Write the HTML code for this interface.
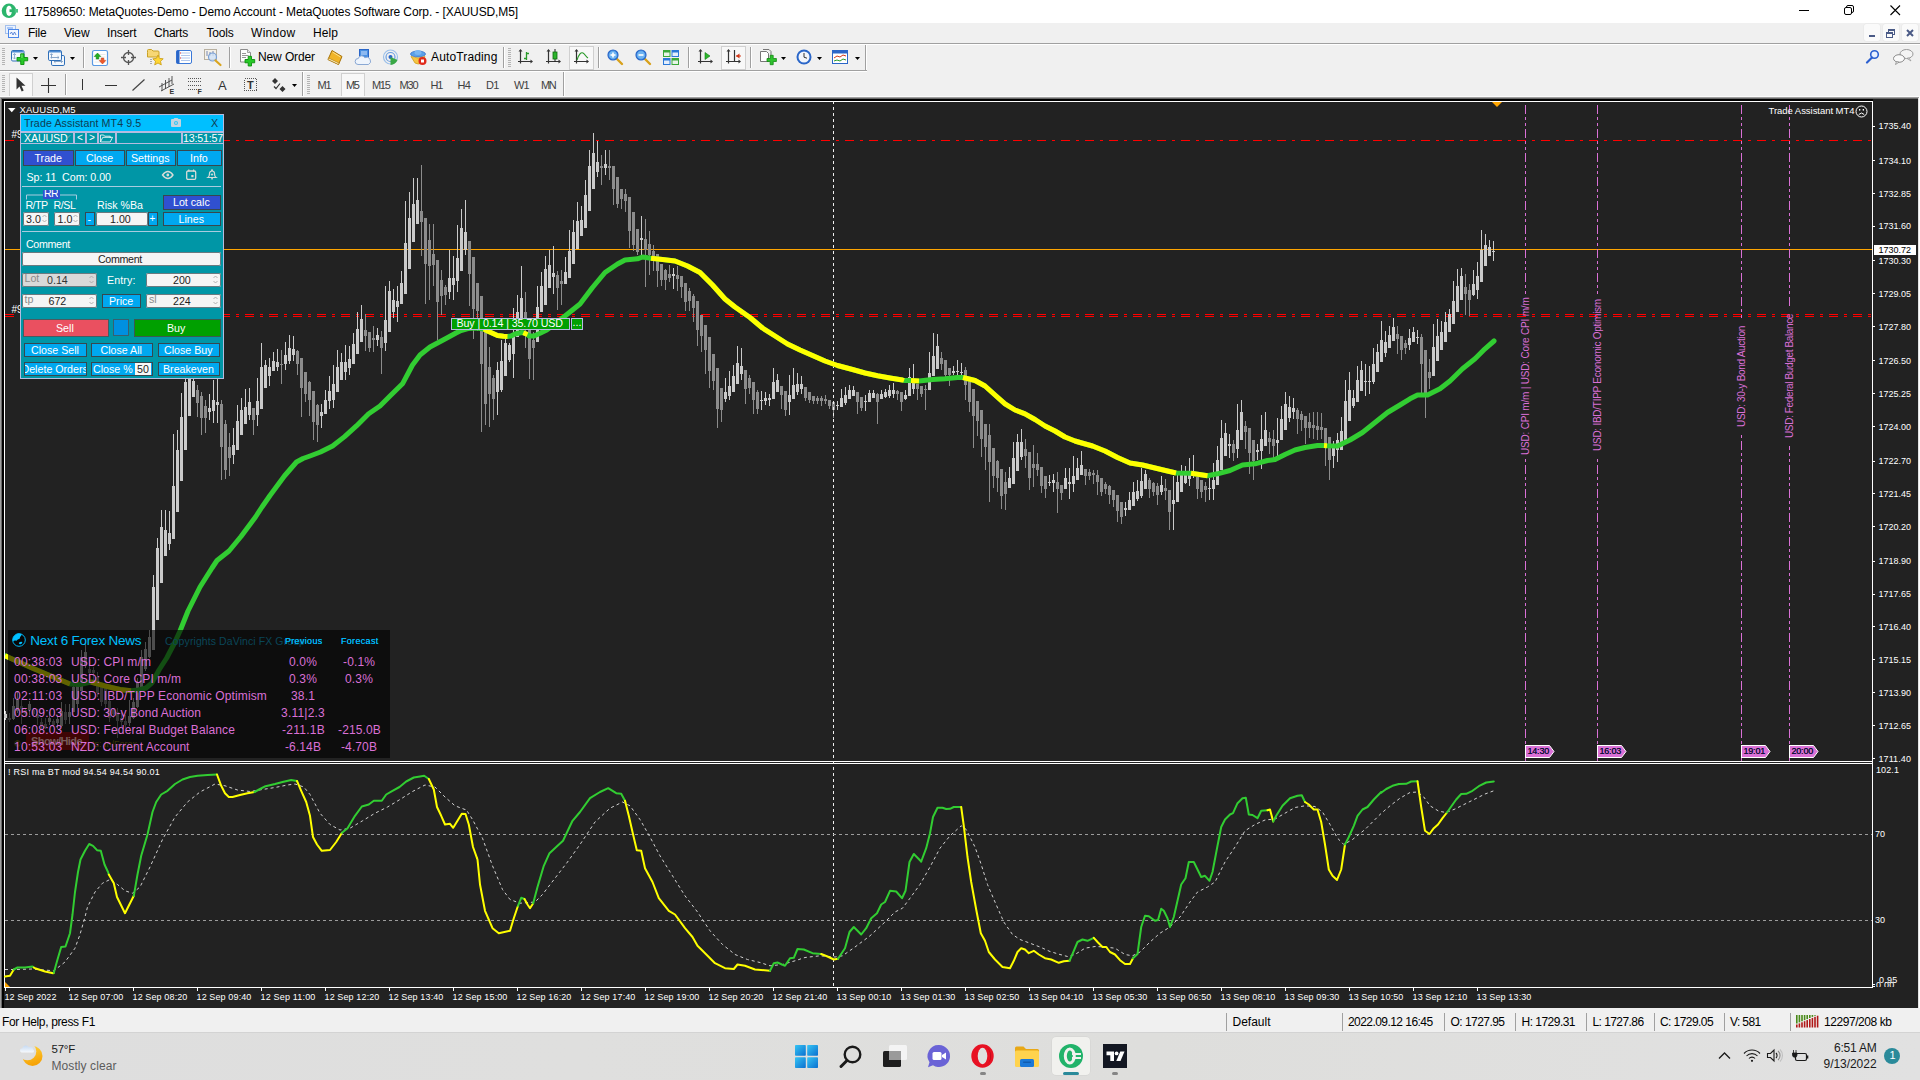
<!DOCTYPE html><html><head><meta charset="utf-8"><title>MT4</title><style>
html,body{margin:0;padding:0;background:#f0f0f0;}
body{width:1920px;height:1080px;overflow:hidden;position:relative;font-family:"Liberation Sans",sans-serif;}
#root{position:absolute;left:0;top:0;width:1920px;height:1080px;overflow:hidden;}
svg{position:absolute;overflow:visible}
.ab{position:absolute}
</style></head><body><div id="root">
<div style="position:absolute;left:0px;top:0px;width:1920px;height:23px;background:#ffffff;"></div>
<svg style="left:1px;top:3px" width="18" height="16" viewBox="0 0 18 16"><circle cx="8" cy="7.800" r="7.300" fill="#2cb56c"/><rect x="13.500" y="6" width="3.500" height="3.600" fill="#4cc486"/><ellipse cx="8" cy="7.800" rx="2.900" ry="5.100" fill="#fff"/><rect x="8.500" y="6.300" width="5" height="2.800" fill="#2cb56c"/></svg>
<span style="position:absolute;left:24px;top:6px;font-size:12px;line-height:12px;color:#000;white-space:pre;letter-spacing:-0.104px;">117589650: MetaQuotes-Demo - Demo Account - MetaQuotes Software Corp. - [XAUUSD,M5]</span>
<div style="position:absolute;left:1799px;top:10px;width:10px;height:1px;background:#000;"></div>
<svg style="left:1844px;top:5px" width="10" height="10" viewBox="0 0 10 10"><rect x="0.5" y="2.5" width="7" height="7" rx="1.5" fill="none" stroke="#000"/><path d="M2.5 2.5v-0.5a1.5 1.5 0 0 1 1.5-1.5h4a1.5 1.5 0 0 1 1.5 1.5v4a1.5 1.5 0 0 1-1.5 1.5h-0.5" fill="none" stroke="#000"/></svg>
<svg style="left:1890px;top:5px" width="11" height="11" viewBox="0 0 11 11"><path d="M0.5 0.5l9.5 9.5M10 0.5l-9.5 9.5" stroke="#000" stroke-width="1.1" fill="none"/></svg>
<div style="position:absolute;left:0px;top:23px;width:1920px;height:20px;background:#f0f0f0;"></div>
<svg style="left:5px;top:25px" width="15" height="14" viewBox="0 0 15 14"><rect x="0.5" y="0.5" width="10" height="8" fill="#eaf2ff" stroke="#5a8ee0" stroke-dasharray="1 1"/><rect x="3.5" y="4.5" width="10" height="8" fill="#f4f8ff" stroke="#4a86e8"/><path d="M5 9l1.5-2 1.5 3 1.5-3 1.5 3" stroke="#3b6fd0" fill="none" stroke-width="0.8"/><path d="M2 3h6" stroke="#4a86e8" stroke-width="0.8"/></svg>
<span style="position:absolute;left:28px;top:27px;font-size:12px;line-height:12px;color:#000;white-space:pre;letter-spacing:-0.209px;">File</span>
<span style="position:absolute;left:64px;top:27px;font-size:12px;line-height:12px;color:#000;white-space:pre;letter-spacing:-0.073px;">View</span>
<span style="position:absolute;left:107px;top:27px;font-size:12px;line-height:12px;color:#000;white-space:pre;letter-spacing:-0.085px;">Insert</span>
<span style="position:absolute;left:154px;top:27px;font-size:12px;line-height:12px;color:#000;white-space:pre;letter-spacing:-0.224px;">Charts</span>
<span style="position:absolute;left:206.5px;top:27px;font-size:12px;line-height:12px;color:#000;white-space:pre;letter-spacing:-0.202px;">Tools</span>
<span style="position:absolute;left:251px;top:27px;font-size:12px;line-height:12px;color:#000;white-space:pre;letter-spacing:0.304px;">Window</span>
<span style="position:absolute;left:313px;top:27px;font-size:12px;line-height:12px;color:#000;white-space:pre;letter-spacing:0.080px;">Help</span>
<div style="position:absolute;left:1864px;top:24px;width:16px;height:17px;background:#fafafa;border-radius:2px;box-shadow:0 0 0 0.5px #e6e6e6;"></div>
<div style="position:absolute;left:1883px;top:24px;width:16px;height:17px;background:#fafafa;border-radius:2px;box-shadow:0 0 0 0.5px #e6e6e6;"></div>
<div style="position:absolute;left:1902px;top:24px;width:16px;height:17px;background:#fafafa;border-radius:2px;box-shadow:0 0 0 0.5px #e6e6e6;"></div>
<div style="position:absolute;left:1869px;top:35px;width:6px;height:2px;background:#4a5a86;"></div>
<svg style="left:1886px;top:29px" width="10" height="10" viewBox="0 0 10 10"><rect x="2.5" y="0.5" width="6" height="5" fill="none" stroke="#4a5a86"/><rect x="2" y="0" width="7" height="2" fill="#4a5a86"/><rect x="0.5" y="3.5" width="6" height="5" fill="#fafafa" stroke="#4a5a86"/><rect x="0" y="3" width="7" height="2" fill="#4a5a86"/></svg>
<svg style="left:1906px;top:29px" width="8" height="8" viewBox="0 0 8 8"><path d="M1 1l6 6M7 1l-6 6" stroke="#4a5a86" stroke-width="2" fill="none"/></svg>
<div style="position:absolute;left:0px;top:43px;width:1920px;height:1px;background:#a0a0a0;"></div>
<div style="position:absolute;left:0px;top:44px;width:1920px;height:1px;background:#ffffff;"></div>
<div style="position:absolute;left:2px;top:48px;width:3px;height:1px;background:#b4b4b4;"></div><div style="position:absolute;left:2px;top:50px;width:3px;height:1px;background:#b4b4b4;"></div><div style="position:absolute;left:2px;top:52px;width:3px;height:1px;background:#b4b4b4;"></div><div style="position:absolute;left:2px;top:54px;width:3px;height:1px;background:#b4b4b4;"></div><div style="position:absolute;left:2px;top:56px;width:3px;height:1px;background:#b4b4b4;"></div><div style="position:absolute;left:2px;top:58px;width:3px;height:1px;background:#b4b4b4;"></div><div style="position:absolute;left:2px;top:60px;width:3px;height:1px;background:#b4b4b4;"></div><div style="position:absolute;left:2px;top:62px;width:3px;height:1px;background:#b4b4b4;"></div><div style="position:absolute;left:2px;top:64px;width:3px;height:1px;background:#b4b4b4;"></div>
<div style="position:absolute;left:865px;top:45px;width:1px;height:26px;background:#a0a0a0;"></div>
<div style="position:absolute;left:866px;top:45px;width:1px;height:26px;background:#fff;"></div>
<div style="position:absolute;left:0px;top:70px;width:867px;height:1px;background:#a0a0a0;"></div>
<div style="position:absolute;left:0px;top:71px;width:867px;height:1px;background:#ffffff;"></div>
<svg style="left:11px;top:50px" width="18" height="16" viewBox="0 0 18 16"><rect x="0.5" y="0.5" width="12.500" height="10.500" rx="1.300" fill="#f4f8fd" stroke="#2f6fb8"/><path d="M1 2.500v-0.700a0.800 0.800 0 0 1 0.800-0.800h9.900a0.800 0.800 0 0 1 0.800 0.800v0.700z" fill="#4a8ad4"/><path d="M3.500 3.500v5.500M2 5l1.500-1.500 1.500 1.500M2 7.500l1.500 1.500 1.500-1.500" stroke="#8aa8cc" stroke-width="0.900" fill="none"/><path d="M9.700 3.800h3.300v3.700h3.700v3.300h-3.700v3.700h-3.300v-3.700h-3.700v-3.300h3.700z" fill="#27c927" stroke="#0b8f0b" stroke-width="0.900"/><path d="M10.300 4.500h1.200v3.600h-1.200z" fill="#8af08a" opacity="0.700"/></svg>
<svg style="left:33px;top:57px" width="5" height="3"><path d="M0 0h5l-2.5 3z" fill="#000"/></svg>
<svg style="left:48px;top:50px" width="18" height="16" viewBox="0 0 18 16"><rect x="3.500" y="5.500" width="13" height="10" rx="1.300" fill="#f4f8fd" stroke="#2f6fb8"/><path d="M6 11.500h8.500M6 11.500l1.500-1.300M6 11.500l1.500 1.300M14.500 11.500l-1.500-1.300M14.500 11.500l-1.500 1.300" stroke="#7a9cc4" stroke-width="0.900" fill="none"/><rect x="0.500" y="0.500" width="13" height="10" rx="1.300" fill="#f4f8fd" stroke="#2f6fb8"/><path d="M1 2.500v-0.700a0.800 0.800 0 0 1 0.800-0.800h10.400a0.800 0.800 0 0 1 0.800 0.800v0.700z" fill="#4a8ad4"/><path d="M3.500 3.800v4.700M2.500 7.500h8.500M2.300 5l1.200-1.300 1.200 1.300M11 7.500l-1.400-1.200M11 7.500l-1.400 1.200" stroke="#7a9cc4" stroke-width="0.900" fill="none"/></svg>
<svg style="left:70px;top:57px" width="5" height="3"><path d="M0 0h5l-2.5 3z" fill="#000"/></svg>
<div style="position:absolute;left:83px;top:47px;width:1px;height:21px;background:#a0a0a0;"></div><div style="position:absolute;left:84px;top:47px;width:1px;height:21px;background:#ffffff;"></div>
<svg style="left:92px;top:50px" width="16" height="16" viewBox="0 0 16 16"><rect x="0.500" y="0.500" width="15" height="15" rx="1.800" fill="#fff" stroke="#5a9ae4" stroke-width="1.200"/><path d="M2.500 4.500h11M2.500 7h11M2.500 9.500h11M2.500 12h11" stroke="#e4e4e4" stroke-width="0.800"/><path d="M5.500 3l3.300 3.500h-2v2.500h-2.600v-2.500h-2z" fill="#22b022" stroke="#0a7a0a" stroke-width="0.500"/><path d="M10.500 14l-3.300-3.500h2v-2.500h2.600v2.500h2z" fill="#f0582a" stroke="#c03a10" stroke-width="0.500"/></svg>
<svg style="left:121px;top:50px" width="15" height="15" viewBox="0 0 15 15"><circle cx="7.5" cy="7.5" r="5" fill="none" stroke="#555" stroke-width="1.3"/><path d="M7.5 0v5M7.5 10v5M0 7.5h5M10 7.5h5" stroke="#555" stroke-width="1.3"/></svg>
<svg style="left:147px;top:49px" width="18" height="17" viewBox="0 0 18 17"><path d="M0.5 3.5v-2a1 1 0 0 1 1-1h3l1.5 1.5h5a1 1 0 0 1 1 1v5h-11.5z" fill="#f7d774" stroke="#c9a227"/><path d="M11 6l1.6 3.4 3.6.4-2.7 2.5.8 3.6-3.3-1.9-3.3 1.9.8-3.6-2.7-2.5 3.6-.4z" fill="#ffd633" stroke="#c99a10" stroke-width="0.8"/><path d="M4 10v5" stroke="#666" stroke-dasharray="1 1"/></svg>
<svg style="left:176px;top:50px" width="16" height="15" viewBox="0 0 16 15"><rect x="0.5" y="0.5" width="15" height="13" rx="1.5" fill="#fff" stroke="#3a78d8"/><rect x="0.5" y="0.5" width="3" height="13" fill="#2a66c8"/><path d="M5 3h9M5 5.5h9M5 8h9M5 10.5h9" stroke="#9db9e8" stroke-width="0.8"/><rect x="4" y="2.5" width="1" height="1" fill="#d22"/><rect x="4" y="7.5" width="1" height="1" fill="#d22"/></svg>
<svg style="left:204px;top:49px" width="18" height="17" viewBox="0 0 18 17"><rect x="0.5" y="0.5" width="12" height="10" fill="#f4f1ea" stroke="#b8b0a0"/><path d="M3 2v5M6 3v4M9 2v5" stroke="#6b7fae" stroke-width="0.9"/><circle cx="8.5" cy="8" r="4" fill="#cfe2f7" fill-opacity="0.8" stroke="#7aa0d4" stroke-width="1.2"/><path d="M11.5 11.5l5 4.5" stroke="#d9a520" stroke-width="2.2" stroke-linecap="round"/></svg>
<div style="position:absolute;left:229px;top:47px;width:1px;height:21px;background:#a0a0a0;"></div><div style="position:absolute;left:230px;top:47px;width:1px;height:21px;background:#ffffff;"></div>
<svg style="left:239px;top:49px" width="17" height="18" viewBox="0 0 17 18"><path d="M1.500 0.500h7l3 3v9.500h-10z" fill="#fdfdfd" stroke="#8c8c8c"/><path d="M8.500 0.500v3h3" fill="#e8e8e8" stroke="#8c8c8c" stroke-width="0.800"/><path d="M3 4.500h4M3 6.500h6.500M3 8.500h4" stroke="#8a8a8a" stroke-width="0.900"/><path d="M9.200 7.300h3.300v3.200h3.200v3.300h-3.200v3.200h-3.300v-3.200h-3.200v-3.300h3.200z" fill="#27c927" stroke="#0b8f0b" stroke-width="0.900"/></svg>
<span style="position:absolute;left:258px;top:51px;font-size:12px;line-height:12px;color:#000;white-space:pre;letter-spacing:-0.112px;">New Order</span>
<svg style="left:327px;top:50px" width="16" height="15" viewBox="0 0 16 15"><path d="M5 0.5l10 6-3.5 8-10.5-5z" fill="#f0b429" stroke="#a8730a"/><path d="M1 9.5l10.500 5 .5-1.500-10.500-5z" fill="#fff3c4" stroke="#a8730a" stroke-width="0.6"/><path d="M5.500 2l8 5" stroke="#ffe08a"/></svg>
<svg style="left:355px;top:49px" width="17" height="17" viewBox="0 0 17 17"><rect x="4.5" y="0.5" width="9" height="10" fill="#4a90e2" stroke="#2a66c8"/><path d="M6 3h6M6 5h6" stroke="#cfe2ff" stroke-width="1"/><path d="M3 15.5a3 3 0 0 1 .3-6 3.500 3.500 0 0 1 6.500-.8 3 3 0 0 1 3.700 6.800z" fill="#eef4fc" stroke="#8aa8d4"/></svg>
<svg style="left:382px;top:49px" width="17" height="17" viewBox="0 0 17 17"><circle cx="8.5" cy="8" r="7" fill="none" stroke="#9cc0ea" stroke-width="1.2"/><circle cx="8.5" cy="8" r="4.500" fill="none" stroke="#6a9ee0" stroke-width="1.2"/><circle cx="8.5" cy="8" r="2" fill="#2a66c8"/><path d="M8.500 8v8a8 8 0 0 0 7-5z" fill="#39a845"/></svg>
<svg style="left:410px;top:49px" width="17" height="17" viewBox="0 0 17 17"><ellipse cx="8" cy="5" rx="7.500" ry="3" fill="#5aa0e8" stroke="#2a66c8" stroke-width="0.7"/><ellipse cx="8" cy="3.500" rx="3.500" ry="2.500" fill="#7ab6f2"/><path d="M1 7.500q7 3 14 0l-3 6.500q-4 2-7 0z" fill="#f6c544" stroke="#c9960f" stroke-width="0.7"/><circle cx="12.500" cy="12" r="4" fill="#e02a1c"/><rect x="11" y="10.500" width="3" height="3" fill="#fff"/></svg>
<span style="position:absolute;left:431px;top:51px;font-size:12px;line-height:12px;color:#000;white-space:pre;letter-spacing:0.143px;">AutoTrading</span>
<div style="position:absolute;left:503px;top:47px;width:1px;height:21px;background:#a0a0a0;"></div><div style="position:absolute;left:504px;top:47px;width:1px;height:21px;background:#ffffff;"></div>
<div style="position:absolute;left:508px;top:48px;width:3px;height:1px;background:#b4b4b4;"></div><div style="position:absolute;left:508px;top:50px;width:3px;height:1px;background:#b4b4b4;"></div><div style="position:absolute;left:508px;top:52px;width:3px;height:1px;background:#b4b4b4;"></div><div style="position:absolute;left:508px;top:54px;width:3px;height:1px;background:#b4b4b4;"></div><div style="position:absolute;left:508px;top:56px;width:3px;height:1px;background:#b4b4b4;"></div><div style="position:absolute;left:508px;top:58px;width:3px;height:1px;background:#b4b4b4;"></div><div style="position:absolute;left:508px;top:60px;width:3px;height:1px;background:#b4b4b4;"></div><div style="position:absolute;left:508px;top:62px;width:3px;height:1px;background:#b4b4b4;"></div><div style="position:absolute;left:508px;top:64px;width:3px;height:1px;background:#b4b4b4;"></div><div style="position:absolute;left:508px;top:66px;width:3px;height:1px;background:#b4b4b4;"></div>
<svg style="left:518px;top:49px" width="16" height="16" viewBox="0 0 16 16"><path d="M2.500 1.500v13M0 12.500h14" stroke="#333" stroke-width="1.200" fill="none"/><path d="M2.500 0l-2 2.500h4zM15 12.500l-2.500-2v4z" fill="#333"/><path d="M8.500 3v8M8.500 4.500h2.500M6 9.500h2.500" stroke="#2a9a2a" stroke-width="1.300" fill="none"/></svg>
<svg style="left:546px;top:49px" width="16" height="16" viewBox="0 0 16 16"><path d="M2.500 1.500v13M0 12.500h14" stroke="#333" stroke-width="1.200" fill="none"/><path d="M2.500 0l-2 2.500h4zM15 12.500l-2.500-2v4z" fill="#333"/><path d="M9 0v13" stroke="#222" stroke-width="1"/><rect x="7" y="3" width="4" height="7" fill="#2cb52c" stroke="#0d6d0d" stroke-width="0.8"/></svg>
<div style="position:absolute;left:569px;top:46px;width:25px;height:24px;background:#f8f8f8;box-shadow:inset 0 0 0 1px #d0d0d0;"></div>
<svg style="left:574px;top:49px" width="16" height="16" viewBox="0 0 16 16"><path d="M2.500 1.500v13M0 12.500h14" stroke="#333" stroke-width="1.200" fill="none"/><path d="M2.500 0l-2 2.500h4zM15 12.500l-2.500-2v4z" fill="#333"/><path d="M3 11c2-6 4-8 6-7s3 4 5 5" stroke="#2a9a2a" stroke-width="1.200" fill="none"/></svg>
<div style="position:absolute;left:598px;top:47px;width:1px;height:21px;background:#a0a0a0;"></div><div style="position:absolute;left:599px;top:47px;width:1px;height:21px;background:#ffffff;"></div>
<svg style="left:607px;top:49px" width="17" height="17" viewBox="0 0 17 17"><path d="M9.500 9.500l5.500 5.500" stroke="#d8a11c" stroke-width="2.400" stroke-linecap="round"/><circle cx="6" cy="6" r="5" fill="#4a9be8" stroke="#2a66c8" stroke-width="1.200"/><circle cx="6" cy="6" r="3.800" fill="#6fb4f2"/><path d="M3.500 6h5" stroke="#fff" stroke-width="1.600"/><path d="M6 3.500v5" stroke="#fff" stroke-width="1.600"/></svg>
<svg style="left:635px;top:49px" width="17" height="17" viewBox="0 0 17 17"><path d="M9.500 9.500l5.500 5.500" stroke="#d8a11c" stroke-width="2.400" stroke-linecap="round"/><circle cx="6" cy="6" r="5" fill="#4a9be8" stroke="#2a66c8" stroke-width="1.200"/><circle cx="6" cy="6" r="3.800" fill="#6fb4f2"/><path d="M3.500 6h5" stroke="#fff" stroke-width="1.600"/></svg>
<svg style="left:663px;top:50px" width="16" height="15" viewBox="0 0 16 15"><rect x="0" y="0" width="7.500" height="7" fill="#3aa83a"/><rect x="8.500" y="0" width="7.500" height="7" fill="#2a78d8"/><rect x="0" y="8" width="7.500" height="7" fill="#2a78d8"/><rect x="8.500" y="8" width="7.500" height="7" fill="#3aa83a"/><rect x="1" y="2.500" width="5.500" height="3.500" fill="#e8f4e8"/><rect x="9.500" y="2.500" width="5.500" height="3.500" fill="#e4eefc"/><rect x="1" y="10.500" width="5.500" height="3.500" fill="#e4eefc"/><rect x="9.500" y="10.500" width="5.500" height="3.500" fill="#e8f4e8"/></svg>
<div style="position:absolute;left:688px;top:47px;width:1px;height:21px;background:#a0a0a0;"></div><div style="position:absolute;left:689px;top:47px;width:1px;height:21px;background:#ffffff;"></div>
<svg style="left:698px;top:49px" width="16" height="16" viewBox="0 0 16 16"><path d="M2.500 1.500v13M0 12.500h14" stroke="#333" stroke-width="1.200" fill="none"/><path d="M2.500 0l-2 2.500h4zM15 12.500l-2.500-2v4z" fill="#333"/><path d="M7 3.500l5 3.500-5 3.500z" fill="#2cb52c" stroke="#0d7d0d" stroke-width="0.600"/></svg>
<div style="position:absolute;left:721px;top:46px;width:25px;height:24px;background:#f8f8f8;box-shadow:inset 0 0 0 1px #d0d0d0;"></div>
<svg style="left:726px;top:49px" width="16" height="16" viewBox="0 0 16 16"><path d="M2.500 1.500v13M0 12.500h14" stroke="#333" stroke-width="1.200" fill="none"/><path d="M2.500 0l-2 2.500h4zM15 12.500l-2.500-2v4z" fill="#333"/><path d="M8.500 1v12" stroke="#333" stroke-width="1.200"/><path d="M10 7l3.500-2.500v5z" fill="#d23a1a"/><path d="M10 7h5" stroke="#d23a1a"/></svg>
<div style="position:absolute;left:750px;top:47px;width:1px;height:21px;background:#a0a0a0;"></div><div style="position:absolute;left:751px;top:47px;width:1px;height:21px;background:#ffffff;"></div>
<svg style="left:760px;top:49px" width="17" height="17" viewBox="0 0 17 17"><path d="M0.500 2.500h6l2 2v8h-8z" fill="#fff" stroke="#777"/><path d="M3 0.500h6l2 2v8" fill="none" stroke="#777"/><path d="M7 9.500h3.200v-3.200h3v3.200h3.200v3h-3.200v3.200h-3v-3.200H7z" fill="#2ec22e" stroke="#138a13" stroke-width="0.800"/></svg>
<svg style="left:781px;top:57px" width="5" height="3"><path d="M0 0h5l-2.5 3z" fill="#000"/></svg>
<svg style="left:796px;top:49px" width="16" height="16" viewBox="0 0 16 16"><circle cx="8" cy="8" r="7.500" fill="#2a66c8"/><circle cx="8" cy="8" r="5.500" fill="#f2f6fc"/><path d="M8 4v4.200l3 1" stroke="#333" stroke-width="1" fill="none"/></svg>
<svg style="left:817px;top:57px" width="5" height="3"><path d="M0 0h5l-2.5 3z" fill="#000"/></svg>
<svg style="left:832px;top:50px" width="16" height="14" viewBox="0 0 16 14"><rect x="0.500" y="0.500" width="15" height="13" fill="#fff" stroke="#2a66c8"/><rect x="0.500" y="0.500" width="15" height="3" fill="#2a66c8"/><path d="M2 8l3-2 3 1 3-2 3 1" stroke="#d23a1a" fill="none" stroke-width="1"/><path d="M2 11l3-1 3 1 3-2 3 1" stroke="#2a9a2a" fill="none" stroke-width="1"/></svg>
<svg style="left:855px;top:57px" width="5" height="3"><path d="M0 0h5l-2.5 3z" fill="#000"/></svg>
<svg style="left:1866px;top:50px" width="14" height="14" viewBox="0 0 14 14"><circle cx="8.500" cy="4.500" r="3.800" fill="#e8f0ff" stroke="#2a5fd0" stroke-width="1.600"/><path d="M6 7.500l-5 5" stroke="#2a5fd0" stroke-width="2.200" stroke-linecap="round"/></svg>
<svg style="left:1893px;top:49px" width="21" height="16" viewBox="0 0 21 16"><ellipse cx="13.500" cy="5" rx="6.500" ry="4.500" fill="#f4f4f4" stroke="#9a9a9a"/><path d="M16 9l2 3-4-2.600z" fill="#f4f4f4" stroke="#9a9a9a" stroke-width="0.800"/><ellipse cx="6" cy="9.500" rx="5.500" ry="3.800" fill="#fafafa" stroke="#8a8a8a"/><path d="M3.500 12.500l-1 3 3.500-2.300z" fill="#fafafa" stroke="#8a8a8a" stroke-width="0.800"/></svg>
<div style="position:absolute;left:2px;top:75px;width:3px;height:1px;background:#b4b4b4;"></div><div style="position:absolute;left:2px;top:77px;width:3px;height:1px;background:#b4b4b4;"></div><div style="position:absolute;left:2px;top:79px;width:3px;height:1px;background:#b4b4b4;"></div><div style="position:absolute;left:2px;top:81px;width:3px;height:1px;background:#b4b4b4;"></div><div style="position:absolute;left:2px;top:83px;width:3px;height:1px;background:#b4b4b4;"></div><div style="position:absolute;left:2px;top:85px;width:3px;height:1px;background:#b4b4b4;"></div><div style="position:absolute;left:2px;top:87px;width:3px;height:1px;background:#b4b4b4;"></div><div style="position:absolute;left:2px;top:89px;width:3px;height:1px;background:#b4b4b4;"></div><div style="position:absolute;left:2px;top:91px;width:3px;height:1px;background:#b4b4b4;"></div>
<div style="position:absolute;left:9px;top:73px;width:24px;height:24px;background:#f8f8f8;box-shadow:inset 0 0 0 1px #d0d0d0;"></div>
<svg style="left:16px;top:77px" width="10" height="16" viewBox="0 0 10 16"><path d="M0.500 0.500v12l3-3 2.200 5 2-1-2.200-4.800h4z" fill="#333"/></svg>
<svg style="left:41px;top:78px" width="15" height="15" viewBox="0 0 15 15"><path d="M7.500 0v15M0 7.500h15" stroke="#333" stroke-width="1.100"/></svg>
<div style="position:absolute;left:65px;top:74px;width:1px;height:21px;background:#a0a0a0;"></div><div style="position:absolute;left:66px;top:74px;width:1px;height:21px;background:#ffffff;"></div>
<div style="position:absolute;left:82px;top:79px;width:1px;height:11px;background:#333;"></div>
<div style="position:absolute;left:105px;top:85px;width:12px;height:1px;background:#333;"></div>
<svg style="left:132px;top:78px" width="13" height="14" viewBox="0 0 13 14"><path d="M0.500 12.500l12-11" stroke="#444" stroke-width="1.200"/></svg>
<svg style="left:159px;top:76px" width="16" height="16" viewBox="0 0 16 16"><path d="M0 11l13-7M2 15l13-7M3 7v8M6.500 4v9M10 2v9M13 0v8" stroke="#444" stroke-width="0.900" fill="none"/></svg><span style="position:absolute;left:169.5px;top:87.5px;font-size:7px;line-height:7px;color:#333;white-space:pre;font-weight:bold;">E</span>
<svg style="left:188px;top:78px" width="14" height="13" viewBox="0 0 14 13"><path d="M0 0.500h13M0 3.500h13M0 7.500h13M0 11.500h10" stroke="#555" stroke-width="1" stroke-dasharray="1 1"/></svg><span style="position:absolute;left:197.5px;top:87.5px;font-size:7px;line-height:7px;color:#333;white-space:pre;font-weight:bold;">F</span>
<span style="position:absolute;left:218px;top:79px;font-size:13px;line-height:13px;color:#333;white-space:pre;">A</span>
<svg style="left:244px;top:78px" width="13" height="13" viewBox="0 0 13 13"><rect x="0.500" y="0.500" width="12" height="12" fill="none" stroke="#555" stroke-dasharray="1 1" shape-rendering="crispEdges"/></svg><span style="position:absolute;left:247px;top:80px;font-size:11px;line-height:11px;color:#333;white-space:pre;font-weight:bold;">T</span>
<svg style="left:272px;top:78px" width="14" height="14" viewBox="0 0 14 14"><path d="M3 0l3 3-3 3-3-3zM10.500 8l3 3-3 3-3-3z" fill="#333"/><path d="M2 8.500l2 2 4-5" stroke="#333" stroke-width="1.200" fill="none"/></svg>
<svg style="left:292px;top:84px" width="5" height="3"><path d="M0 0h5l-2.5 3z" fill="#000"/></svg>
<div style="position:absolute;left:302px;top:72px;width:1px;height:26px;background:#a0a0a0;"></div><div style="position:absolute;left:303px;top:72px;width:1px;height:26px;background:#ffffff;"></div>
<div style="position:absolute;left:307px;top:75px;width:3px;height:1px;background:#b4b4b4;"></div><div style="position:absolute;left:307px;top:77px;width:3px;height:1px;background:#b4b4b4;"></div><div style="position:absolute;left:307px;top:79px;width:3px;height:1px;background:#b4b4b4;"></div><div style="position:absolute;left:307px;top:81px;width:3px;height:1px;background:#b4b4b4;"></div><div style="position:absolute;left:307px;top:83px;width:3px;height:1px;background:#b4b4b4;"></div><div style="position:absolute;left:307px;top:85px;width:3px;height:1px;background:#b4b4b4;"></div><div style="position:absolute;left:307px;top:87px;width:3px;height:1px;background:#b4b4b4;"></div><div style="position:absolute;left:307px;top:89px;width:3px;height:1px;background:#b4b4b4;"></div><div style="position:absolute;left:307px;top:91px;width:3px;height:1px;background:#b4b4b4;"></div><div style="position:absolute;left:307px;top:93px;width:3px;height:1px;background:#b4b4b4;"></div>
<div style="position:absolute;left:341px;top:73px;width:24px;height:24px;background:#f8f8f8;box-shadow:inset 0 0 0 1px #d0d0d0;"></div>
<span style="position:absolute;left:317.5px;top:80px;font-size:11px;line-height:11px;color:#404040;white-space:pre;letter-spacing:-1.140px;">M1</span>
<span style="position:absolute;left:346px;top:80px;font-size:11px;line-height:11px;color:#404040;white-space:pre;letter-spacing:-1.390px;">M5</span>
<span style="position:absolute;left:372px;top:80px;font-size:11px;line-height:11px;color:#404040;white-space:pre;letter-spacing:-1.299px;">M15</span>
<span style="position:absolute;left:399.5px;top:80px;font-size:11px;line-height:11px;color:#404040;white-space:pre;letter-spacing:-1.132px;">M30</span>
<span style="position:absolute;left:430.5px;top:80px;font-size:11px;line-height:11px;color:#404040;white-space:pre;letter-spacing:-1.281px;">H1</span>
<span style="position:absolute;left:457.5px;top:80px;font-size:11px;line-height:11px;color:#404040;white-space:pre;letter-spacing:-0.781px;">H4</span>
<span style="position:absolute;left:486px;top:80px;font-size:11px;line-height:11px;color:#404040;white-space:pre;letter-spacing:-0.781px;">D1</span>
<span style="position:absolute;left:514px;top:80px;font-size:11px;line-height:11px;color:#404040;white-space:pre;letter-spacing:-1.000px;">W1</span>
<span style="position:absolute;left:541px;top:80px;font-size:11px;line-height:11px;color:#404040;white-space:pre;letter-spacing:-1.303px;">MN</span>
<div style="position:absolute;left:563px;top:72px;width:1px;height:26px;background:#a0a0a0;"></div><div style="position:absolute;left:564px;top:72px;width:1px;height:26px;background:#ffffff;"></div>
<div style="position:absolute;left:0px;top:96px;width:1920px;height:1px;background:#fbfbfb;"></div>
<div style="position:absolute;left:0px;top:97px;width:1920px;height:1px;background:#a0a0a0;"></div>
<div style="position:absolute;left:1px;top:98px;width:1918px;height:1px;background:#696969;"></div>
<div style="position:absolute;left:0px;top:98px;width:1px;height:910px;background:#a0a0a0;"></div>
<div style="position:absolute;left:1px;top:99px;width:1px;height:909px;background:#696969;"></div>
<div style="position:absolute;left:2px;top:99px;width:1916px;height:909px;background:#222222;"></div>
<div style="position:absolute;left:2px;top:99px;width:1871px;height:2px;background:#000;"></div>
<div style="position:absolute;left:2px;top:99px;width:2px;height:909px;background:#000;"></div>
<div style="position:absolute;left:1918px;top:98px;width:1px;height:910px;background:#e3e3e3;"></div>
<div style="position:absolute;left:1919px;top:97px;width:1px;height:911px;background:#ffffff;"></div>
<svg style="left:0;top:0" width="1920" height="1080" viewBox="0 0 1920 1080"><g shape-rendering="crispEdges" fill="#fff"><rect x="4" y="101" width="1869" height="1"/><rect x="4" y="101" width="1" height="886"/><rect x="1872" y="101" width="1" height="887"/><rect x="4" y="761" width="1869" height="1"/><rect x="4" y="763" width="1869" height="1"/><rect x="4" y="987" width="1869" height="1"/><rect x="1873" y="126" width="2" height="1"/><rect x="1873" y="160" width="2" height="1"/><rect x="1873" y="193" width="2" height="1"/><rect x="1873" y="226" width="2" height="1"/><rect x="1873" y="260" width="2" height="1"/><rect x="1873" y="293" width="2" height="1"/><rect x="1873" y="326" width="2" height="1"/><rect x="1873" y="360" width="2" height="1"/><rect x="1873" y="393" width="2" height="1"/><rect x="1873" y="426" width="2" height="1"/><rect x="1873" y="461" width="2" height="1"/><rect x="1873" y="493" width="2" height="1"/><rect x="1873" y="526" width="2" height="1"/><rect x="1873" y="561" width="2" height="1"/><rect x="1873" y="594" width="2" height="1"/><rect x="1873" y="626" width="2" height="1"/><rect x="1873" y="659" width="2" height="1"/><rect x="1873" y="692" width="2" height="1"/><rect x="1873" y="725" width="2" height="1"/><rect x="1873" y="758" width="2" height="1"/><rect x="5" y="988" width="1" height="3"/><rect x="69" y="988" width="1" height="3"/><rect x="133" y="988" width="1" height="3"/><rect x="197" y="988" width="1" height="3"/><rect x="261" y="988" width="1" height="3"/><rect x="325" y="988" width="1" height="3"/><rect x="389" y="988" width="1" height="3"/><rect x="453" y="988" width="1" height="3"/><rect x="517" y="988" width="1" height="3"/><rect x="581" y="988" width="1" height="3"/><rect x="645" y="988" width="1" height="3"/><rect x="709" y="988" width="1" height="3"/><rect x="773" y="988" width="1" height="3"/><rect x="837" y="988" width="1" height="3"/><rect x="901" y="988" width="1" height="3"/><rect x="965" y="988" width="1" height="3"/><rect x="1029" y="988" width="1" height="3"/><rect x="1093" y="988" width="1" height="3"/><rect x="1157" y="988" width="1" height="3"/><rect x="1221" y="988" width="1" height="3"/><rect x="1285" y="988" width="1" height="3"/><rect x="1349" y="988" width="1" height="3"/><rect x="1413" y="988" width="1" height="3"/><rect x="1477" y="988" width="1" height="3"/></g><g shape-rendering="crispEdges" fill="none"><path d="M5 140.5H1872" stroke="#ff0000" stroke-width="1" stroke-dasharray="9 6 3 6"/><path d="M5 314.5H1872M5 316.5H1872" stroke="#ff0000" stroke-width="1" stroke-dasharray="9 6 3 6"/><path d="M5 249.5H1872" stroke="#ffa500" stroke-width="1"/></g><g shape-rendering="crispEdges"><path d="M9.5 713V722M21.5 700V724M25.5 709V716M33.5 708V716M37.5 709V725M41.5 718V729M45.5 718V729M53.5 719V727M65.5 704V724M89.5 660V680M93.5 667V682M97.5 672V697M101.5 684V706M105.5 686V708M109.5 699V722M113.5 708V718M117.5 708V738M121.5 712V727M125.5 715V728M197.5 385V417M201.5 392V435M205.5 400V433M221.5 400V480M225.5 420V479M229.5 433V476M253.5 408V435M281.5 350V384M297.5 350V375M301.5 358V417M305.5 372V402M309.5 381V416M313.5 391V440M317.5 404V442M365.5 314V351M369.5 332V352M373.5 326V352M381.5 331V374M421.5 165V256M425.5 218V304M429.5 224V300M433.5 224V286M437.5 260V340M441.5 270V315M445.5 285V305M469.5 241V306M473.5 257V339M477.5 283V331M481.5 296V432M485.5 331V425M489.5 347V427M493.5 375V420M525.5 292V348M529.5 318V379M533.5 332V380M557.5 271V310M561.5 270V305M601.5 155V185M609.5 150V180M613.5 166V205M617.5 177V208M621.5 189V209M625.5 189V212M629.5 197V248M633.5 212V251M637.5 229V255M645.5 219V287M649.5 231V275M653.5 245V271M657.5 254V287M661.5 264V286M665.5 269V290M669.5 265V282M677.5 266V291M681.5 276V298M685.5 283V311M689.5 288V311M693.5 294V322M697.5 301V346M701.5 315V352M705.5 325V374M709.5 337V388M713.5 354V390M717.5 368V428M721.5 388V422M745.5 370V404M749.5 375V394M753.5 382V414M757.5 390V414M781.5 386V409M785.5 391V416M805.5 387V401M809.5 392V403M813.5 396V404M817.5 396V404M821.5 396V406M825.5 395V404M829.5 400V409M833.5 401V418M857.5 392V414M861.5 397V411M877.5 393V424M897.5 390V400M901.5 392V411M917.5 384V400M921.5 386V397M925.5 385V410M941.5 352V370M945.5 360V380M949.5 368V386M965.5 367V400M969.5 381V412M973.5 389V448M977.5 401V436M981.5 410V457M985.5 424V470M989.5 424V502M993.5 448V488M997.5 460V492M1001.5 469V509M1005.5 472V510M1025.5 439V468M1029.5 452V490M1033.5 445V487M1037.5 453V476M1041.5 467V493M1045.5 476V498M1057.5 472V513M1061.5 485V500M1085.5 469V485M1089.5 469V480M1093.5 470V484M1097.5 470V495M1101.5 478V496M1105.5 482V494M1109.5 485V504M1113.5 490V507M1117.5 495V522M1121.5 502V524M1149.5 478V498M1153.5 482V496M1157.5 483V505M1165.5 479V500M1169.5 490V530M1197.5 477V499M1201.5 480V498M1205.5 482V502M1233.5 440V461M1245.5 421V449M1249.5 428V474M1253.5 440V480M1269.5 432V454M1273.5 430V458M1297.5 408V434M1301.5 411V431M1305.5 416V444M1309.5 413V438M1313.5 412V439M1317.5 412V440M1321.5 413V439M1325.5 428V466M1329.5 437V480M1397.5 326V354M1401.5 336V360M1405.5 340V354M1421.5 334V394M1425.5 350V418M1429.5 359V389M1465.5 274V315M1469.5 284V316" stroke="#8c8c8c" stroke-width="1" fill="none"/><path d="M5.5 711V720M13.5 698V720M17.5 692V713M29.5 701V715M49.5 712V725M57.5 716V729M61.5 702V727M69.5 704V724M73.5 680V712M77.5 680V708M81.5 650V691M85.5 644V668M129.5 700V726M133.5 698V719M137.5 678V708M141.5 650V688M145.5 642V671M149.5 630V658M153.5 575V650M157.5 538V620M161.5 510V583M165.5 510V556M169.5 511V550M173.5 434V539M177.5 430V512M181.5 393V481M185.5 370V450M189.5 350V416M193.5 360V397M209.5 394V420M213.5 380V423M217.5 375V423M233.5 428V464M237.5 405V450M241.5 398V435M245.5 389V424M249.5 388V420M257.5 378V426M261.5 343V409M265.5 360V388M269.5 358V386M273.5 352V371M277.5 349V371M285.5 342V370M289.5 335V364M293.5 336V361M321.5 404V428M325.5 390V414M329.5 376V409M333.5 365V408M337.5 350V392M341.5 353V380M345.5 345V380M349.5 346V375M353.5 333V364M357.5 312V354M361.5 305V342M377.5 328V346M385.5 286V351M389.5 281V332M393.5 289V318M397.5 286V322M401.5 271V304M405.5 201V294M409.5 192V269M413.5 178V242M417.5 178V224M449.5 250V299M453.5 256V300M457.5 225V292M461.5 209V271M465.5 200V255M497.5 362V415M501.5 340V392M505.5 337V376M509.5 343V362M513.5 308V378M517.5 295V337M521.5 266V326M537.5 286V342M541.5 272V312M545.5 256V305M549.5 250V288M553.5 246V294M565.5 257V284M569.5 230V278M573.5 220V264M577.5 202V249M581.5 206V236M585.5 180V228M589.5 150V211M593.5 133V189M597.5 141V177M605.5 150V175M641.5 216V255M673.5 268V289M725.5 378V402M729.5 371V400M733.5 365V392M737.5 346V384M741.5 348V380M761.5 391V410M765.5 392V405M769.5 394V406M773.5 368V399M777.5 374V392M789.5 375V415M793.5 368V399M797.5 373V395M801.5 376V394M837.5 401V410M841.5 389V407M845.5 387V405M849.5 385V399M853.5 386V396M865.5 395V411M869.5 390V402M873.5 390V398M881.5 390V399M885.5 389V398M889.5 385V398M893.5 383V398M905.5 390V400M909.5 368V396M913.5 364V394M929.5 352V390M933.5 333V376M937.5 334V369M953.5 366V375M957.5 360V375M961.5 363V376M1009.5 467V488M1013.5 442V484M1017.5 434V471M1021.5 429V460M1049.5 475V486M1053.5 474V492M1065.5 468V489M1069.5 468V499M1073.5 456V492M1077.5 458V480M1081.5 451V475M1125.5 502V516M1129.5 492V510M1133.5 482V506M1137.5 480V501M1141.5 468V498M1145.5 470V489M1161.5 476V495M1173.5 476V530M1177.5 475V502M1181.5 465V492M1185.5 466V484M1189.5 458V486M1193.5 455V478M1209.5 478V500M1213.5 463V500M1217.5 446V485M1221.5 420V470M1225.5 423V456M1229.5 434V458M1237.5 404V458M1241.5 400V440M1257.5 444V460M1261.5 415V469M1265.5 412V446M1277.5 418V456M1281.5 406V440M1285.5 392V430M1289.5 396V422M1293.5 398V419M1333.5 441V468M1337.5 433V462M1341.5 417V450M1345.5 380V440M1349.5 372V421M1353.5 390V408M1357.5 366V402M1361.5 361V391M1365.5 364V396M1369.5 366V394M1373.5 348V384M1377.5 344V372M1381.5 321V362M1385.5 331V357M1389.5 326V348M1393.5 318V341M1409.5 329V350M1413.5 327V342M1417.5 330V344M1433.5 324V376M1437.5 319V361M1441.5 321V350M1445.5 312V342M1449.5 309V332M1453.5 281V324M1457.5 269V312M1461.5 268V300M1473.5 270V296M1477.5 262V299M1481.5 230V282M1485.5 234V266M1489.5 240V256M1493.5 241V261" stroke="#cacaca" stroke-width="1" fill="none"/><path d="M8 718h3v2h-3zM20 706h3v3h-3zM24 710h3v4h-3zM32 710h3v4h-3zM36 714h3v4h-3zM40 722h3v4h-3zM44 724h3v4h-3zM52 721h3v4h-3zM64 712h3v8h-3zM88 669h3v4h-3zM92 670h3v3h-3zM96 677h3v16h-3zM100 687h3v15h-3zM104 688h3v16h-3zM108 701h3v17h-3zM112 710h3v4h-3zM116 712h3v9h-3zM120 718h3v4h-3zM124 721h3v4h-3zM196 390h3v13h-3zM200 396h3v22h-3zM204 406h3v12h-3zM220 404h3v43h-3zM224 424h3v46h-3zM228 447h3v11h-3zM252 408h3v12h-3zM280 364h3v1h-3zM296 351h3v13h-3zM300 358h3v30h-3zM304 372h3v22h-3zM308 382h3v18h-3zM312 391h3v31h-3zM316 405h3v20h-3zM364 330h3v6h-3zM368 332h3v16h-3zM372 338h3v2h-3zM380 337h3v11h-3zM420 211h3v11h-3zM424 218h3v46h-3zM428 240h3v26h-3zM432 254h3v11h-3zM436 260h3v42h-3zM440 280h3v16h-3zM444 287h3v8h-3zM468 241h3v33h-3zM472 257h3v52h-3zM476 283h3v28h-3zM480 296h3v68h-3zM484 331h3v73h-3zM488 367h3v27h-3zM492 378h3v21h-3zM524 312h3v7h-3zM528 318h3v41h-3zM532 340h3v8h-3zM556 275h3v13h-3zM560 281h3v3h-3zM600 166h3v2h-3zM608 166h3v2h-3zM612 166h3v23h-3zM616 177h3v27h-3zM620 189h3v10h-3zM624 194h3v7h-3zM628 197h3v34h-3zM632 212h3v33h-3zM636 229h3v23h-3zM644 239h3v11h-3zM648 244h3v11h-3zM652 251h3v5h-3zM656 254h3v17h-3zM660 264h3v16h-3zM664 270h3v10h-3zM668 274h3v4h-3zM676 275h3v4h-3zM680 276h3v11h-3zM684 283h3v19h-3zM688 291h3v10h-3zM692 296h3v12h-3zM696 301h3v29h-3zM700 315h3v21h-3zM704 325h3v25h-3zM708 337h3v34h-3zM712 354h3v27h-3zM716 368h3v41h-3zM720 388h3v22h-3zM744 370h3v19h-3zM748 378h3v10h-3zM752 382h3v18h-3zM756 392h3v17h-3zM780 386h3v9h-3zM784 391h3v19h-3zM804 387h3v11h-3zM808 392h3v8h-3zM812 396h3v5h-3zM816 398h3v3h-3zM820 398h3v3h-3zM824 399h3v2h-3zM828 400h3v6h-3zM832 402h3v8h-3zM856 392h3v10h-3zM860 397h3v11h-3zM876 394h3v8h-3zM896 391h3v3h-3zM900 392h3v10h-3zM916 384h3v5h-3zM920 386h3v8h-3zM924 389h3v1h-3zM940 358h3v6h-3zM944 360h3v15h-3zM948 368h3v7h-3zM964 370h3v15h-3zM968 381h3v21h-3zM972 389h3v27h-3zM976 401h3v20h-3zM980 410h3v29h-3zM984 424h3v23h-3zM988 435h3v27h-3zM992 448h3v28h-3zM996 461h3v17h-3zM1000 469h3v27h-3zM1004 482h3v12h-3zM1024 449h3v7h-3zM1028 452h3v26h-3zM1032 464h3v4h-3zM1036 464h3v6h-3zM1040 467h3v19h-3zM1044 476h3v13h-3zM1056 482h3v7h-3zM1060 485h3v8h-3zM1084 469h3v7h-3zM1088 472h3v4h-3zM1092 473h3v2h-3zM1096 475h3v7h-3zM1100 478h3v14h-3zM1104 484h3v5h-3zM1108 486h3v9h-3zM1112 490h3v10h-3zM1116 495h3v16h-3zM1120 502h3v15h-3zM1148 480h3v9h-3zM1152 483h3v9h-3zM1156 486h3v9h-3zM1164 488h3v3h-3zM1168 490h3v22h-3zM1196 477h3v12h-3zM1200 480h3v12h-3zM1204 486h3v4h-3zM1232 444h3v9h-3zM1244 426h3v6h-3zM1248 428h3v25h-3zM1252 440h3v21h-3zM1268 438h3v4h-3zM1272 439h3v7h-3zM1296 410h3v9h-3zM1300 414h3v6h-3zM1304 416h3v12h-3zM1308 422h3v6h-3zM1312 425h3v3h-3zM1316 426h3v4h-3zM1320 427h3v3h-3zM1324 428h3v17h-3zM1328 437h3v23h-3zM1396 334h3v5h-3zM1400 336h3v14h-3zM1404 343h3v5h-3zM1420 337h3v27h-3zM1424 350h3v45h-3zM1428 372h3v6h-3zM1464 287h3v7h-3zM1468 290h3v10h-3z" fill="#8c8c8c"/><path d="M4 714h3v4h-3zM12 706h3v13h-3zM16 700h3v11h-3zM28 704h3v6h-3zM48 718h3v4h-3zM56 719h3v4h-3zM60 711h3v15h-3zM68 712h3v5h-3zM72 687h3v25h-3zM76 686h3v18h-3zM80 657h3v34h-3zM84 652h3v14h-3zM128 716h3v7h-3zM132 702h3v16h-3zM136 682h3v25h-3zM140 657h3v30h-3zM144 649h3v20h-3zM148 637h3v20h-3zM152 587h3v63h-3zM156 548h3v72h-3zM160 527h3v56h-3zM164 530h3v26h-3zM168 533h3v11h-3zM172 486h3v53h-3zM176 450h3v62h-3zM180 417h3v64h-3zM184 382h3v68h-3zM188 360h3v56h-3zM192 381h3v16h-3zM208 408h3v4h-3zM212 400h3v11h-3zM216 402h3v3h-3zM232 445h3v10h-3zM236 421h3v29h-3zM240 410h3v25h-3zM244 407h3v17h-3zM248 402h3v13h-3zM256 401h3v14h-3zM260 367h3v42h-3zM264 365h3v23h-3zM268 367h3v9h-3zM272 361h3v10h-3zM276 362h3v5h-3zM284 355h3v9h-3zM288 348h3v13h-3zM292 349h3v6h-3zM320 412h3v4h-3zM324 400h3v14h-3zM328 391h3v10h-3zM332 384h3v16h-3zM336 367h3v25h-3zM340 362h3v18h-3zM344 362h3v10h-3zM348 359h3v9h-3zM352 344h3v20h-3zM356 329h3v25h-3zM360 319h3v23h-3zM376 335h3v5h-3zM384 320h3v23h-3zM388 291h3v41h-3zM392 300h3v12h-3zM396 301h3v6h-3zM400 283h3v21h-3zM404 243h3v51h-3zM408 218h3v51h-3zM412 204h3v38h-3zM416 200h3v24h-3zM448 278h3v14h-3zM452 278h3v7h-3zM456 258h3v23h-3zM460 228h3v43h-3zM464 232h3v18h-3zM496 370h3v22h-3zM500 361h3v29h-3zM504 343h3v33h-3zM508 345h3v15h-3zM512 336h3v18h-3zM516 312h3v25h-3zM520 298h3v20h-3zM536 307h3v35h-3zM540 286h3v26h-3zM544 269h3v36h-3zM548 265h3v23h-3zM552 273h3v4h-3zM564 272h3v12h-3zM568 251h3v27h-3zM572 232h3v32h-3zM576 221h3v28h-3zM580 220h3v16h-3zM584 195h3v33h-3zM588 166h3v45h-3zM592 153h3v36h-3zM596 162h3v10h-3zM604 164h3v4h-3zM640 238h3v2h-3zM672 274h3v2h-3zM724 392h3v7h-3zM728 386h3v10h-3zM732 376h3v16h-3zM736 363h3v21h-3zM740 366h3v8h-3zM760 400h3v1h-3zM764 398h3v3h-3zM768 398h3v2h-3zM772 382h3v17h-3zM776 380h3v12h-3zM788 395h3v7h-3zM792 385h3v14h-3zM796 384h3v8h-3zM800 384h3v5h-3zM836 405h3v1h-3zM840 398h3v9h-3zM844 395h3v8h-3zM848 390h3v9h-3zM852 390h3v6h-3zM864 401h3v1h-3zM868 393h3v9h-3zM872 393h3v5h-3zM880 394h3v5h-3zM884 392h3v5h-3zM888 390h3v6h-3zM892 390h3v4h-3zM904 395h3v4h-3zM908 377h3v19h-3zM912 382h3v7h-3zM928 373h3v17h-3zM932 356h3v20h-3zM936 346h3v23h-3zM952 371h3v2h-3zM956 371h3v1h-3zM960 372h3v1h-3zM1008 478h3v10h-3zM1012 458h3v26h-3zM1016 442h3v29h-3zM1020 442h3v15h-3zM1048 482h3v1h-3zM1052 480h3v3h-3zM1064 478h3v11h-3zM1068 482h3v2h-3zM1072 476h3v8h-3zM1076 468h3v12h-3zM1080 465h3v10h-3zM1124 508h3v2h-3zM1128 500h3v10h-3zM1132 492h3v14h-3zM1136 491h3v8h-3zM1140 481h3v15h-3zM1144 474h3v15h-3zM1160 485h3v7h-3zM1172 500h3v4h-3zM1176 482h3v20h-3zM1180 475h3v17h-3zM1184 472h3v11h-3zM1188 475h3v4h-3zM1192 475h3v1h-3zM1208 488h3v1h-3zM1212 480h3v9h-3zM1216 460h3v25h-3zM1220 438h3v32h-3zM1224 433h3v23h-3zM1228 444h3v2h-3zM1236 430h3v19h-3zM1240 412h3v28h-3zM1256 450h3v2h-3zM1260 439h3v12h-3zM1264 430h3v16h-3zM1276 440h3v3h-3zM1280 419h3v21h-3zM1284 404h3v26h-3zM1288 407h3v11h-3zM1292 408h3v4h-3zM1332 448h3v8h-3zM1336 440h3v10h-3zM1340 431h3v19h-3zM1344 401h3v39h-3zM1348 390h3v31h-3zM1352 398h3v8h-3zM1356 380h3v22h-3zM1360 370h3v21h-3zM1364 381h3v1h-3zM1368 381h3v1h-3zM1372 364h3v18h-3zM1376 352h3v20h-3zM1380 340h3v22h-3zM1384 342h3v11h-3zM1388 335h3v13h-3zM1392 327h3v14h-3zM1408 338h3v7h-3zM1412 332h3v10h-3zM1416 337h3v1h-3zM1432 347h3v29h-3zM1436 336h3v25h-3zM1440 332h3v18h-3zM1444 322h3v20h-3zM1448 314h3v18h-3zM1452 301h3v23h-3zM1456 286h3v26h-3zM1460 276h3v24h-3zM1472 284h3v11h-3zM1476 276h3v14h-3zM1480 250h3v32h-3zM1484 245h3v21h-3zM1488 247h3v9h-3zM1492 251h3v1h-3z" fill="#cacaca"/></g><g shape-rendering="crispEdges" fill="none"><path d="M833.5 101V987" stroke="#f0f0f0" stroke-width="1" stroke-dasharray="3 3"/><path d="M5 834.5H1872M5 920.5H1872" stroke="#9c9c9c" stroke-width="1" stroke-dasharray="3 3"/><path d="M1525.5 105V294" stroke="#da70d6" stroke-width="1" stroke-dasharray="9 3 3 3 3 3"/><path d="M1525.5 459V757" stroke="#da70d6" stroke-width="1" stroke-dasharray="9 3 3 3 3 3" stroke-dashoffset="18"/><path d="M1597.5 105V294" stroke="#da70d6" stroke-width="1" stroke-dasharray="9 3 3 3 3 3"/><path d="M1597.5 459V757" stroke="#da70d6" stroke-width="1" stroke-dasharray="9 3 3 3 3 3" stroke-dashoffset="18"/><path d="M1741.5 105V318" stroke="#da70d6" stroke-width="1" stroke-dasharray="9 3 3 3 3 3"/><path d="M1741.5 435V757" stroke="#da70d6" stroke-width="1" stroke-dasharray="9 3 3 3 3 3" stroke-dashoffset="18"/><path d="M1789.5 105V306" stroke="#da70d6" stroke-width="1" stroke-dasharray="9 3 3 3 3 3"/><path d="M1789.5 446V757" stroke="#da70d6" stroke-width="1" stroke-dasharray="9 3 3 3 3 3" stroke-dashoffset="5"/></g><clipPath id="mc"><rect x="5" y="102" width="1867" height="659"/></clipPath><g clip-path="url(#mc)"><polyline points="5.0,655.7 32.0,668.0 70.0,684.0 80.0,684.5 91.0,682.0 105.0,686.0 120.0,689.5 131.0,690.7 138.5,690.0 146.0,688.0 152.0,682.8 159.0,670.0 166.7,658.0 174.0,644.0 180.0,631.0 188.0,611.0 200.0,587.0 212.0,568.0 217.0,560.5 229.0,551.0 241.0,536.5 255.5,517.0 262.0,507.0 270.0,495.5 284.4,476.0 296.5,462.0 303.0,458.5 310.0,456.0 320.5,452.0 332.6,446.0 344.6,436.6 356.7,425.7 368.7,413.7 380.0,406.0 390.0,396.0 402.5,383.8 412.5,365.0 420.0,355.0 430.0,347.0 445.0,339.0 450.5,336.0 456.0,333.0 461.0,330.5 468.0,328.5 476.0,328.0 484.0,329.0 487.5,331.0 497.5,335.5 503.5,336.3 507.5,336.5 511.0,336.0 515.0,334.0 521.7,332.5 523.3,332.8 527.5,334.5 529.0,336.0 534.0,336.0 540.0,333.3 546.7,330.0 555.0,324.0 567.5,314.0 580.0,304.0 592.5,287.5 605.0,272.5 617.5,264.0 625.0,260.0 637.5,258.8 642.5,257.0 651.0,258.2 662.5,259.5 675.0,261.0 687.5,266.0 700.0,272.5 712.5,285.0 725.0,299.0 735.0,307.0 750.0,317.5 762.5,328.0 775.0,336.0 787.5,344.0 800.0,350.0 812.5,355.5 825.0,361.0 837.5,365.5 852.5,369.5 865.0,373.0 877.5,375.8 890.0,378.0 902.5,380.0 904.0,380.5 911.0,380.5 919.0,381.0 932.5,379.5 945.0,378.8 957.5,377.5 963.0,377.5 975.0,380.5 985.0,386.0 995.0,395.0 1005.0,403.8 1015.0,410.0 1025.0,413.8 1035.0,419.5 1045.0,426.0 1055.0,431.0 1065.0,437.0 1075.0,441.0 1080.0,442.5 1092.5,446.0 1105.0,451.0 1117.5,457.5 1130.0,463.0 1142.5,465.0 1155.0,468.0 1167.5,471.0 1176.0,473.0 1191.0,473.3 1207.5,475.8 1217.5,473.8 1230.0,470.5 1242.5,465.0 1255.0,463.8 1267.5,460.5 1275.0,459.5 1285.0,454.5 1295.0,450.0 1305.0,447.5 1317.5,445.5 1324.0,445.5 1327.0,445.7 1337.5,446.0 1350.0,440.0 1362.5,432.5 1375.0,422.5 1387.5,412.5 1400.0,405.0 1410.0,398.8 1417.5,395.0 1427.5,395.0 1440.0,388.8 1450.0,381.0 1462.5,368.8 1475.0,358.8 1485.0,348.8 1494.0,341.0" fill="none" stroke="#32cd32" stroke-width="5" stroke-linejoin="round" stroke-linecap="round"/><polyline points="5.0,655.7 32.0,668.0 70.0,684.0" fill="none" stroke="#ffff00" stroke-width="5" stroke-linejoin="round" stroke-linecap="butt"/><polyline points="91.0,682.0 105.0,686.0 120.0,689.5 131.0,690.7" fill="none" stroke="#ffff00" stroke-width="5" stroke-linejoin="round" stroke-linecap="butt"/><polyline points="484.0,329.0 487.5,331.0 497.5,335.5 503.5,336.3 507.5,336.5" fill="none" stroke="#ffff00" stroke-width="5" stroke-linejoin="round" stroke-linecap="butt"/><polyline points="523.3,332.8 527.5,334.5" fill="none" stroke="#ffff00" stroke-width="5" stroke-linejoin="round" stroke-linecap="butt"/><polyline points="651.0,258.2 662.5,259.5 675.0,261.0 687.5,266.0 700.0,272.5 712.5,285.0 725.0,299.0 735.0,307.0 750.0,317.5 762.5,328.0 775.0,336.0 787.5,344.0 800.0,350.0 812.5,355.5 825.0,361.0 837.5,365.5 852.5,369.5 865.0,373.0 877.5,375.8 890.0,378.0 902.5,380.0 904.0,380.5" fill="none" stroke="#ffff00" stroke-width="5" stroke-linejoin="round" stroke-linecap="butt"/><polyline points="911.0,380.5 919.0,381.0" fill="none" stroke="#ffff00" stroke-width="5" stroke-linejoin="round" stroke-linecap="butt"/><polyline points="963.0,377.5 975.0,380.5 985.0,386.0 995.0,395.0 1005.0,403.8 1015.0,410.0 1025.0,413.8 1035.0,419.5 1045.0,426.0 1055.0,431.0 1065.0,437.0 1075.0,441.0 1080.0,442.5 1092.5,446.0 1105.0,451.0 1117.5,457.5 1130.0,463.0 1142.5,465.0 1155.0,468.0 1167.5,471.0 1176.0,473.0" fill="none" stroke="#ffff00" stroke-width="5" stroke-linejoin="round" stroke-linecap="butt"/><polyline points="1191.0,473.3 1207.5,475.8" fill="none" stroke="#ffff00" stroke-width="5" stroke-linejoin="round" stroke-linecap="butt"/><polyline points="1324.0,445.5 1327.0,445.7" fill="none" stroke="#ffff00" stroke-width="5" stroke-linejoin="round" stroke-linecap="butt"/></g><polyline points="5.0,969.5 15.0,969.5 32.5,969.0 53.8,970.8 65.0,962.0 75.0,948.2 80.0,934.5 85.0,917.0 87.5,907.0 95.0,892.0 102.5,883.2 110.0,879.5 117.5,884.5 125.0,890.8 132.5,893.2 140.0,887.0 150.0,867.0 162.5,839.5 175.0,817.0 187.5,802.0 200.0,792.0 215.0,784.0 225.0,785.8 237.5,790.0 250.0,791.5 262.5,789.5 275.0,787.5 287.5,785.0 295.0,784.0 303.8,787.0 310.0,794.5 320.0,813.2 330.0,824.5 340.0,830.0 350.0,828.2 362.5,820.8 375.0,813.2 387.5,807.0 400.0,799.5 412.5,791.5 425.0,785.0 435.0,787.0 445.0,797.0 455.0,805.8 465.0,809.5 466.2,809.5 472.5,819.5 482.5,838.2 492.5,865.8 502.5,889.5 510.0,899.5 520.0,903.2 535.0,902.0 542.5,894.5 555.0,878.2 567.5,862.0 580.0,844.5 595.0,822.0 610.0,808.2 622.5,802.0 630.0,805.8 640.0,819.5 650.0,837.0 660.0,855.8 672.5,875.8 685.0,895.8 697.5,912.0 710.0,930.8 722.5,944.5 735.0,954.5 747.5,959.5 760.0,962.5 770.0,965.8 782.5,964.5 795.0,960.8 805.0,957.5 820.0,955.8 835.0,957.0 842.5,955.8 855.0,947.0 870.0,935.8 885.0,922.0 895.0,912.0 902.5,908.2 910.0,898.2 920.0,884.5 930.0,867.0 940.0,848.2 950.0,835.8 961.2,825.8 966.2,829.5 975.0,847.0 981.2,864.5 987.5,884.5 995.0,902.0 1003.8,922.0 1012.5,934.5 1020.0,939.5 1030.0,943.2 1040.0,947.0 1050.0,951.5 1060.0,954.5 1067.5,956.5 1075.0,954.5 1085.0,948.2 1095.0,946.5 1105.0,947.0 1115.0,948.2 1125.0,954.5 1132.5,955.8 1140.0,952.0 1150.0,942.0 1160.0,933.2 1170.0,927.0 1180.0,917.0 1190.0,902.0 1197.5,892.0 1207.5,887.0 1215.0,882.0 1225.0,862.0 1235.0,847.0 1245.0,830.8 1255.0,824.5 1265.0,820.0 1275.0,819.0 1285.0,813.2 1295.0,807.5 1305.0,805.8 1315.0,806.5 1322.5,812.0 1330.0,824.5 1337.5,838.2 1343.8,844.5 1352.5,839.5 1365.0,829.5 1377.5,817.0 1380.0,814.5 1390.0,805.8 1400.0,798.2 1410.0,792.5 1417.5,792.0 1423.8,797.0 1430.0,805.8 1438.8,811.2 1446.2,812.5 1455.0,809.0 1465.0,804.0 1475.0,799.0 1485.0,794.0 1493.8,790.8" fill="none" stroke="#d0d0d0" stroke-width="1" stroke-dasharray="3 3"/><polyline points="5.0,976.5 10.0,975.8 13.8,969.5" fill="none" stroke="#ffff00" stroke-width="2" stroke-linejoin="round" stroke-linecap="round"/><polyline points="13.8,969.5 17.5,967.5 25.0,967.5 32.5,966.5 33.8,967.5" fill="none" stroke="#32cd32" stroke-width="2" stroke-linejoin="round" stroke-linecap="round"/><polyline points="33.8,967.5 35.0,968.2 45.0,971.5 53.2,973.2 53.8,972.8" fill="none" stroke="#ffff00" stroke-width="2" stroke-linejoin="round" stroke-linecap="round"/><polyline points="53.8,972.8 57.5,959.5 61.2,947.0 65.5,946.5 70.0,933.2 72.5,914.5 75.0,892.0 78.0,872.0 80.5,859.5 85.0,850.8 89.2,844.0 93.0,845.8 97.0,850.2 100.8,850.8 104.5,864.5 108.0,872.0 108.8,874.5" fill="none" stroke="#32cd32" stroke-width="2" stroke-linejoin="round" stroke-linecap="round"/><polyline points="108.8,874.5 113.8,883.2 117.0,897.0 125.0,913.2 133.8,895.8" fill="none" stroke="#ffff00" stroke-width="2" stroke-linejoin="round" stroke-linecap="round"/><polyline points="133.8,895.8 137.5,874.5 141.2,855.8 147.5,834.5 152.5,812.0 156.2,802.0 161.2,794.5 167.5,790.8 175.0,784.0 182.5,779.5 190.0,777.0 197.5,775.8 207.5,775.0 217.0,774.5" fill="none" stroke="#32cd32" stroke-width="2" stroke-linejoin="round" stroke-linecap="round"/><polyline points="217.0,774.5 221.2,785.8 225.0,793.2 228.8,797.0 232.5,797.0 240.0,795.0 247.5,793.2 254.5,792.0" fill="none" stroke="#ffff00" stroke-width="2" stroke-linejoin="round" stroke-linecap="round"/><polyline points="254.5,792.0 260.0,789.0 265.5,786.2 275.0,784.0 282.5,782.0 291.2,780.0 297.0,781.0" fill="none" stroke="#32cd32" stroke-width="2" stroke-linejoin="round" stroke-linecap="round"/><polyline points="297.0,781.0 301.2,790.8 306.2,802.0 310.0,815.8 313.0,837.0 317.0,844.5 321.8,850.8 330.0,850.0 336.2,842.0 342.0,832.8" fill="none" stroke="#ffff00" stroke-width="2" stroke-linejoin="round" stroke-linecap="round"/><polyline points="342.0,832.8 347.5,828.2 355.0,815.8 361.8,806.5 368.8,804.5 373.8,800.8 381.8,800.8 386.2,794.5 392.5,790.8 399.5,787.0 406.2,781.5 413.8,777.5 420.0,776.5 424.2,775.8 428.8,779.0" fill="none" stroke="#32cd32" stroke-width="2" stroke-linejoin="round" stroke-linecap="round"/><polyline points="428.8,779.0 433.8,789.5 437.0,807.0 441.2,815.8 445.0,824.5 450.0,823.8 453.2,827.8 457.5,820.8 461.8,813.8 465.5,814.0 468.8,824.5 473.0,847.0 477.0,858.2" fill="none" stroke="#ffff00" stroke-width="2" stroke-linejoin="round" stroke-linecap="round"/><polyline points="477.0,858.2 477.5,859.5 480.0,884.5 485.0,910.8 492.5,928.2 498.8,933.2 510.0,930.8 513.8,918.2 518.0,905.8" fill="none" stroke="#ffff00" stroke-width="2" stroke-linejoin="round" stroke-linecap="round"/><polyline points="518.0,905.8 521.2,897.8 524.5,899.0" fill="none" stroke="#32cd32" stroke-width="2" stroke-linejoin="round" stroke-linecap="round"/><polyline points="524.5,899.0 527.5,904.5 530.0,908.2 533.2,903.2" fill="none" stroke="#ffff00" stroke-width="2" stroke-linejoin="round" stroke-linecap="round"/><polyline points="533.2,903.2 537.5,887.0 543.8,865.8 549.5,853.2 556.2,847.0 563.0,840.8 572.5,820.8 580.0,812.0 590.0,798.2 600.0,792.0 608.2,788.2 616.2,793.2 621.2,793.8 625.0,800.8" fill="none" stroke="#32cd32" stroke-width="2" stroke-linejoin="round" stroke-linecap="round"/><polyline points="625.0,800.8 628.8,815.8 632.5,832.0 636.8,850.2 641.2,850.8 645.0,868.2 652.5,882.0 658.8,898.2 668.8,910.8 675.0,914.5 685.0,928.2 692.5,937.0 697.5,945.8 703.8,952.0 715.0,963.2 725.0,968.2 733.8,969.0 737.5,964.5 745.0,965.8 755.0,969.5 770.0,970.8" fill="none" stroke="#ffff00" stroke-width="2" stroke-linejoin="round" stroke-linecap="round"/><polyline points="770.0,970.8 773.8,963.2 777.5,962.5 785.0,965.8 790.0,958.2 793.8,957.8 797.5,949.0 803.8,949.5 812.5,953.2 821.2,954.0" fill="none" stroke="#32cd32" stroke-width="2" stroke-linejoin="round" stroke-linecap="round"/><polyline points="821.2,954.0 827.5,956.5 833.8,959.5 838.0,958.8" fill="none" stroke="#ffff00" stroke-width="2" stroke-linejoin="round" stroke-linecap="round"/><polyline points="838.0,958.8 845.0,948.2 849.5,932.0 853.8,927.0 861.2,934.5 866.2,928.2 871.2,918.2 877.0,913.2 881.2,904.5 885.0,902.0 890.0,890.8 896.2,891.5 902.0,898.2 905.5,890.8 909.5,862.0 913.8,854.0 921.2,861.5" fill="none" stroke="#32cd32" stroke-width="2" stroke-linejoin="round" stroke-linecap="round"/><polyline points="921.2,861.5 926.2,848.2 930.0,833.2 933.0,817.0 937.5,807.8 942.5,807.8 946.2,809.0 950.0,808.8 953.8,807.0 961.2,807.0" fill="none" stroke="#32cd32" stroke-width="2" stroke-linejoin="round" stroke-linecap="round"/><polyline points="961.2,807.0 963.8,825.8 967.5,857.0 971.2,882.0 976.2,909.5 980.8,933.2 985.0,940.8 988.8,952.0 995.0,959.5 1002.5,967.0 1010.0,968.2 1013.8,960.8 1017.5,952.0 1021.2,948.2 1025.0,949.5 1028.8,953.2 1033.8,950.8 1038.8,954.5 1045.0,958.2 1051.2,959.5 1058.8,962.8 1063.8,961.2 1069.5,960.8" fill="none" stroke="#ffff00" stroke-width="2" stroke-linejoin="round" stroke-linecap="round"/><polyline points="1069.5,960.8 1073.8,950.8 1077.5,942.0 1082.5,939.5 1087.5,940.8 1093.8,937.8" fill="none" stroke="#32cd32" stroke-width="2" stroke-linejoin="round" stroke-linecap="round"/><polyline points="1093.8,937.8 1098.0,942.5 1102.5,947.0 1106.2,947.0 1110.0,952.0 1115.0,954.5 1120.0,960.2 1125.0,964.0 1130.0,964.0 1133.0,958.2" fill="none" stroke="#ffff00" stroke-width="2" stroke-linejoin="round" stroke-linecap="round"/><polyline points="1133.0,958.2 1137.5,954.0 1141.2,927.0 1145.0,915.8 1148.8,916.2 1155.0,920.8 1158.0,920.0 1161.2,908.8 1163.8,910.8 1167.5,918.2 1170.0,927.0 1173.8,917.0 1177.5,900.8 1181.2,884.5 1185.5,878.2 1188.8,862.0 1193.8,862.0 1197.5,869.5 1201.2,877.0 1205.0,875.8 1209.5,880.8 1212.5,872.0 1217.5,845.8 1221.2,827.0 1225.0,819.5 1230.0,814.5 1233.0,813.2 1237.5,803.2 1242.5,798.2 1245.8,797.8 1248.8,814.5 1252.5,815.0 1257.5,818.2 1261.2,810.8 1267.5,810.2" fill="none" stroke="#32cd32" stroke-width="2" stroke-linejoin="round" stroke-linecap="round"/><polyline points="1267.5,810.2 1270.0,809.5 1273.2,821.5" fill="none" stroke="#ffff00" stroke-width="2" stroke-linejoin="round" stroke-linecap="round"/><polyline points="1273.2,821.5 1276.2,815.8 1282.5,805.8 1290.0,798.2 1297.5,795.8 1301.8,795.2 1305.0,802.0" fill="none" stroke="#32cd32" stroke-width="2" stroke-linejoin="round" stroke-linecap="round"/><polyline points="1305.0,802.0 1308.8,804.5 1313.8,809.5 1317.5,809.5 1321.2,822.0 1325.0,844.5 1328.8,869.5 1332.5,875.8 1337.0,880.0 1341.2,869.5 1345.0,844.5" fill="none" stroke="#ffff00" stroke-width="2" stroke-linejoin="round" stroke-linecap="round"/><polyline points="1345.0,844.5 1348.8,837.0 1353.8,825.8 1357.5,815.8 1362.5,809.5 1367.5,807.0 1373.8,799.5 1381.2,792.0" fill="none" stroke="#32cd32" stroke-width="2" stroke-linejoin="round" stroke-linecap="round"/><polyline points="1381.2,792.8 1386.2,789.0 1392.5,785.8 1398.8,784.0 1406.2,783.8 1411.2,781.5 1417.5,781.2" fill="none" stroke="#32cd32" stroke-width="2" stroke-linejoin="round" stroke-linecap="round"/><polyline points="1417.5,781.2 1421.2,807.0 1425.0,830.8 1429.5,834.0 1433.8,828.2 1438.0,824.5 1442.5,818.2 1447.0,812.5" fill="none" stroke="#ffff00" stroke-width="2" stroke-linejoin="round" stroke-linecap="round"/><polyline points="1447.0,812.5 1451.2,806.5 1456.2,799.5 1461.2,794.0 1466.2,793.8 1472.5,790.8 1478.8,786.2 1486.2,782.5 1493.8,781.5" fill="none" stroke="#32cd32" stroke-width="2" stroke-linejoin="round" stroke-linecap="round"/><path d="M1492 102h10l-5 5z" fill="#ffa500"/><path d="M5 982l5 5h-5z" fill="#ffa500"/><path d="M1525.5 745.5h24l4.500 6l-4.500 6h-24z" fill="#da70d6" stroke="#fff" stroke-width="1"/><rect x="1525" y="745" width="1" height="13" fill="#fff"/><rect x="1525" y="758" width="1" height="3" fill="#da70d6"/><path d="M1597.5 745.5h24l4.500 6l-4.500 6h-24z" fill="#da70d6" stroke="#fff" stroke-width="1"/><rect x="1597" y="745" width="1" height="13" fill="#fff"/><rect x="1597" y="758" width="1" height="3" fill="#da70d6"/><path d="M1741.5 745.5h24l4.500 6l-4.500 6h-24z" fill="#da70d6" stroke="#fff" stroke-width="1"/><rect x="1741" y="745" width="1" height="13" fill="#fff"/><rect x="1741" y="758" width="1" height="3" fill="#da70d6"/><path d="M1789.5 745.5h24l4.500 6l-4.500 6h-24z" fill="#da70d6" stroke="#fff" stroke-width="1"/><rect x="1789" y="745" width="1" height="13" fill="#fff"/><rect x="1789" y="758" width="1" height="3" fill="#da70d6"/></svg>
<span style="position:absolute;left:1527.5px;top:747px;font-size:9px;line-height:9px;color:#10103a;white-space:pre;letter-spacing:-0.204px;text-shadow:0 0 0.4px #10103a;">14:30</span>
<span style="position:absolute;left:1599.5px;top:747px;font-size:9px;line-height:9px;color:#10103a;white-space:pre;letter-spacing:-0.204px;text-shadow:0 0 0.4px #10103a;">16:03</span>
<span style="position:absolute;left:1743.5px;top:747px;font-size:9px;line-height:9px;color:#10103a;white-space:pre;letter-spacing:-0.204px;text-shadow:0 0 0.4px #10103a;">19:01</span>
<span style="position:absolute;left:1791.5px;top:747px;font-size:9px;line-height:9px;color:#10103a;white-space:pre;letter-spacing:-0.204px;text-shadow:0 0 0.4px #10103a;">20:00</span>
<span style="position:absolute;left:1878.5px;top:122.0px;font-size:9px;line-height:9px;color:#fff;white-space:pre;letter-spacing:-0.004px;">1735.40</span>
<span style="position:absolute;left:1878.5px;top:156.5px;font-size:9px;line-height:9px;color:#fff;white-space:pre;letter-spacing:-0.004px;">1734.10</span>
<span style="position:absolute;left:1878.5px;top:189.5px;font-size:9px;line-height:9px;color:#fff;white-space:pre;letter-spacing:-0.004px;">1732.85</span>
<span style="position:absolute;left:1878.5px;top:222.0px;font-size:9px;line-height:9px;color:#fff;white-space:pre;letter-spacing:-0.004px;">1731.60</span>
<span style="position:absolute;left:1878.5px;top:256.5px;font-size:9px;line-height:9px;color:#fff;white-space:pre;letter-spacing:-0.004px;">1730.30</span>
<span style="position:absolute;left:1878.5px;top:289.5px;font-size:9px;line-height:9px;color:#fff;white-space:pre;letter-spacing:-0.004px;">1729.05</span>
<span style="position:absolute;left:1878.5px;top:322.5px;font-size:9px;line-height:9px;color:#fff;white-space:pre;letter-spacing:-0.004px;">1727.80</span>
<span style="position:absolute;left:1878.5px;top:356.5px;font-size:9px;line-height:9px;color:#fff;white-space:pre;letter-spacing:-0.004px;">1726.50</span>
<span style="position:absolute;left:1878.5px;top:389.5px;font-size:9px;line-height:9px;color:#fff;white-space:pre;letter-spacing:-0.004px;">1725.25</span>
<span style="position:absolute;left:1878.5px;top:422.5px;font-size:9px;line-height:9px;color:#fff;white-space:pre;letter-spacing:-0.004px;">1724.00</span>
<span style="position:absolute;left:1878.5px;top:456.5px;font-size:9px;line-height:9px;color:#fff;white-space:pre;letter-spacing:-0.004px;">1722.70</span>
<span style="position:absolute;left:1878.5px;top:489.5px;font-size:9px;line-height:9px;color:#fff;white-space:pre;letter-spacing:-0.004px;">1721.45</span>
<span style="position:absolute;left:1878.5px;top:522.5px;font-size:9px;line-height:9px;color:#fff;white-space:pre;letter-spacing:-0.004px;">1720.20</span>
<span style="position:absolute;left:1878.5px;top:556.5px;font-size:9px;line-height:9px;color:#fff;white-space:pre;letter-spacing:-0.004px;">1718.90</span>
<span style="position:absolute;left:1878.5px;top:589.5px;font-size:9px;line-height:9px;color:#fff;white-space:pre;letter-spacing:-0.004px;">1717.65</span>
<span style="position:absolute;left:1878.5px;top:622.5px;font-size:9px;line-height:9px;color:#fff;white-space:pre;letter-spacing:-0.004px;">1716.40</span>
<span style="position:absolute;left:1878.5px;top:655.5px;font-size:9px;line-height:9px;color:#fff;white-space:pre;letter-spacing:-0.004px;">1715.15</span>
<span style="position:absolute;left:1878.5px;top:688.5px;font-size:9px;line-height:9px;color:#fff;white-space:pre;letter-spacing:-0.004px;">1713.90</span>
<span style="position:absolute;left:1878.5px;top:721.5px;font-size:9px;line-height:9px;color:#fff;white-space:pre;letter-spacing:-0.004px;">1712.65</span>
<span style="position:absolute;left:1878.5px;top:754.5px;font-size:9px;line-height:9px;color:#fff;white-space:pre;letter-spacing:0.091px;">1711.40</span>
<div style="position:absolute;left:1874px;top:245px;width:42px;height:10px;background:#fff;"></div>
<span style="position:absolute;left:1878.5px;top:245.5px;font-size:9px;line-height:9px;color:#000;white-space:pre;letter-spacing:-0.004px;">1730.72</span>
<span style="position:absolute;left:1876px;top:766px;font-size:9px;line-height:9px;color:#fff;white-space:pre;letter-spacing:0.096px;">102.1</span>
<span style="position:absolute;left:1875px;top:830px;font-size:9px;line-height:9px;color:#fff;white-space:pre;letter-spacing:-0.005px;">70</span>
<span style="position:absolute;left:1875px;top:916px;font-size:9px;line-height:9px;color:#fff;white-space:pre;letter-spacing:-0.005px;">30</span>
<div style="position:absolute;left:1874px;top:960px;width:40px;height:27px;overflow:hidden;"><span style="position:absolute;left:2px;top:20.5px;font-size:9px;line-height:9px;color:#fff;white-space:pre;letter-spacing:0.246px;">0.00</span></div>
<span style="position:absolute;left:1879px;top:975.5px;font-size:9px;line-height:9px;color:#fff;white-space:pre;letter-spacing:0.246px;">0.95</span>
<div style="position:absolute;left:1873px;top:984px;width:2px;height:1px;background:#fff;"></div>
<div style="position:absolute;left:1873px;top:986px;width:2px;height:1px;background:#fff;"></div>
<span style="position:absolute;left:4.5px;top:992.5px;font-size:9px;line-height:9px;color:#fff;white-space:pre;letter-spacing:0.087px;">12 Sep 2022</span>
<span style="position:absolute;left:68.5px;top:992.5px;font-size:9px;line-height:9px;color:#fff;white-space:pre;letter-spacing:0.121px;">12 Sep 07:00</span>
<span style="position:absolute;left:132.5px;top:992.5px;font-size:9px;line-height:9px;color:#fff;white-space:pre;letter-spacing:0.121px;">12 Sep 08:20</span>
<span style="position:absolute;left:196.5px;top:992.5px;font-size:9px;line-height:9px;color:#fff;white-space:pre;letter-spacing:0.121px;">12 Sep 09:40</span>
<span style="position:absolute;left:260.5px;top:992.5px;font-size:9px;line-height:9px;color:#fff;white-space:pre;letter-spacing:0.177px;">12 Sep 11:00</span>
<span style="position:absolute;left:324.5px;top:992.5px;font-size:9px;line-height:9px;color:#fff;white-space:pre;letter-spacing:0.121px;">12 Sep 12:20</span>
<span style="position:absolute;left:388.5px;top:992.5px;font-size:9px;line-height:9px;color:#fff;white-space:pre;letter-spacing:0.121px;">12 Sep 13:40</span>
<span style="position:absolute;left:452.5px;top:992.5px;font-size:9px;line-height:9px;color:#fff;white-space:pre;letter-spacing:0.121px;">12 Sep 15:00</span>
<span style="position:absolute;left:516.5px;top:992.5px;font-size:9px;line-height:9px;color:#fff;white-space:pre;letter-spacing:0.121px;">12 Sep 16:20</span>
<span style="position:absolute;left:580.5px;top:992.5px;font-size:9px;line-height:9px;color:#fff;white-space:pre;letter-spacing:0.121px;">12 Sep 17:40</span>
<span style="position:absolute;left:644.5px;top:992.5px;font-size:9px;line-height:9px;color:#fff;white-space:pre;letter-spacing:0.121px;">12 Sep 19:00</span>
<span style="position:absolute;left:708.5px;top:992.5px;font-size:9px;line-height:9px;color:#fff;white-space:pre;letter-spacing:0.121px;">12 Sep 20:20</span>
<span style="position:absolute;left:772.5px;top:992.5px;font-size:9px;line-height:9px;color:#fff;white-space:pre;letter-spacing:0.121px;">12 Sep 21:40</span>
<span style="position:absolute;left:836.5px;top:992.5px;font-size:9px;line-height:9px;color:#fff;white-space:pre;letter-spacing:0.121px;">13 Sep 00:10</span>
<span style="position:absolute;left:900.5px;top:992.5px;font-size:9px;line-height:9px;color:#fff;white-space:pre;letter-spacing:0.121px;">13 Sep 01:30</span>
<span style="position:absolute;left:964.5px;top:992.5px;font-size:9px;line-height:9px;color:#fff;white-space:pre;letter-spacing:0.121px;">13 Sep 02:50</span>
<span style="position:absolute;left:1028.5px;top:992.5px;font-size:9px;line-height:9px;color:#fff;white-space:pre;letter-spacing:0.121px;">13 Sep 04:10</span>
<span style="position:absolute;left:1092.5px;top:992.5px;font-size:9px;line-height:9px;color:#fff;white-space:pre;letter-spacing:0.121px;">13 Sep 05:30</span>
<span style="position:absolute;left:1156.5px;top:992.5px;font-size:9px;line-height:9px;color:#fff;white-space:pre;letter-spacing:0.121px;">13 Sep 06:50</span>
<span style="position:absolute;left:1220.5px;top:992.5px;font-size:9px;line-height:9px;color:#fff;white-space:pre;letter-spacing:0.121px;">13 Sep 08:10</span>
<span style="position:absolute;left:1284.5px;top:992.5px;font-size:9px;line-height:9px;color:#fff;white-space:pre;letter-spacing:0.121px;">13 Sep 09:30</span>
<span style="position:absolute;left:1348.5px;top:992.5px;font-size:9px;line-height:9px;color:#fff;white-space:pre;letter-spacing:0.121px;">13 Sep 10:50</span>
<span style="position:absolute;left:1412.5px;top:992.5px;font-size:9px;line-height:9px;color:#fff;white-space:pre;letter-spacing:0.121px;">13 Sep 12:10</span>
<span style="position:absolute;left:1476.5px;top:992.5px;font-size:9px;line-height:9px;color:#fff;white-space:pre;letter-spacing:0.121px;">13 Sep 13:30</span>
<svg style="left:8px;top:108px" width="8" height="5"><path d="M0 0h7.500l-3.750 4.200z" fill="#fff"/></svg>
<span style="position:absolute;left:19.5px;top:105px;font-size:9.5px;line-height:9.5px;color:#fff;white-space:pre;letter-spacing:0.064px;">XAUUSD,M5</span>
<span style="position:absolute;left:11.5px;top:129.5px;font-size:10px;line-height:10px;color:#fff;white-space:pre;">#9</span>
<span style="position:absolute;left:11.5px;top:304.5px;font-size:10px;line-height:10px;color:#fff;white-space:pre;">#9</span>
<span style="position:absolute;left:1768.5px;top:106px;font-size:9.5px;line-height:9.5px;color:#fff;white-space:pre;letter-spacing:-0.040px;">Trade Assistant MT4</span>
<svg style="left:1855px;top:104.5px" width="13" height="13"><circle cx="6.500" cy="6.500" r="5.500" fill="none" stroke="#fff" stroke-width="1"/><rect x="4" y="4" width="1.300" height="1.600" fill="#fff"/><rect x="7.700" y="4" width="1.300" height="1.600" fill="#fff"/><path d="M3.800 9.500q2.700-3 5.400 0" stroke="#fff" fill="none" stroke-width="1"/></svg>
<span style="position:absolute;left:8px;top:767.5px;font-size:9px;line-height:9px;color:#fff;white-space:pre;letter-spacing:0.245px;">! RSI ma BT mod 94.54 94.54 90.01</span>
<div style="position:absolute;left:1525px;top:455px;width:0;height:0;"><span style="position:absolute;left:0;top:0;transform-origin:0 0;transform:rotate(-90deg) translateY(-50%);white-space:pre;font-size:10px;line-height:11px;letter-spacing:-0.194px;color:#da70d6;">USD: CPI m/m | USD: Core CPI m/m</span></div>
<div style="position:absolute;left:1597px;top:451.3px;width:0;height:0;"><span style="position:absolute;left:0;top:0;transform-origin:0 0;transform:rotate(-90deg) translateY(-50%);white-space:pre;font-size:10px;line-height:11px;letter-spacing:-0.256px;color:#da70d6;">USD: IBD/TIPP Economic Optimism</span></div>
<div style="position:absolute;left:1741.2px;top:427.2px;width:0;height:0;"><span style="position:absolute;left:0;top:0;transform-origin:0 0;transform:rotate(-90deg) translateY(-50%);white-space:pre;font-size:10px;line-height:11px;letter-spacing:-0.315px;color:#da70d6;">USD: 30-y Bond Auction</span></div>
<div style="position:absolute;left:1789px;top:438.3px;width:0;height:0;"><span style="position:absolute;left:0;top:0;transform-origin:0 0;transform:rotate(-90deg) translateY(-50%);white-space:pre;font-size:10px;line-height:11px;letter-spacing:-0.369px;color:#da70d6;">USD: Federal Budget Balance</span></div>
<div style="position:absolute;left:451px;top:317.5px;width:118.5px;height:12.5px;background:#00a000;box-shadow:inset 0 0 0 1px #b4bce0;"></div>
<span style="position:absolute;left:456.5px;top:317.5px;font-size:10.67px;line-height:10.67px;color:#fff;white-space:pre;letter-spacing:-0.102px;">Buy | 0.14 | 35.70 USD</span>
<div style="position:absolute;left:570.5px;top:317.5px;width:12.5px;height:12.5px;background:#00a000;box-shadow:inset 0 0 0 1px #b4bce0;"></div>
<span style="position:absolute;left:572.5px;top:317px;font-size:10.67px;line-height:10.67px;color:#fff;white-space:pre;">...</span>
<div style="position:absolute;left:20px;top:114px;width:204px;height:265px;background:#0096a6;box-shadow:inset 0 0 0 1px #b4bce0;"></div>
<div style="position:absolute;left:21px;top:115px;width:202px;height:16px;background:#00bfff;"></div>
<div style="position:absolute;left:21px;top:131px;width:202px;height:2px;background:#b4bce0;"></div>
<div style="position:absolute;left:21px;top:143px;width:202px;height:1px;background:#b4bce0;"></div>
<span style="position:absolute;left:24px;top:117.5px;font-size:10.67px;line-height:10.67px;color:#0f3c52;white-space:pre;letter-spacing:0.098px;">Trade Assistant MT4 9.5</span>
<svg style="left:171px;top:118px" width="10" height="9"><path d="M0 2a1 1 0 0 1 1-1h1.500l1-1h3l1 1h1.500a1 1 0 0 1 1 1v6a1 1 0 0 1-1 1h-8a1 1 0 0 1-1-1z" fill="#c4d4e0"/><circle cx="5" cy="5" r="2" fill="#30c4f4"/><circle cx="5" cy="5" r="0.900" fill="#c4d4e0"/></svg>
<span style="position:absolute;left:211px;top:117.5px;font-size:10.67px;line-height:10.67px;color:#0f3c52;white-space:pre;">X</span>
<span style="position:absolute;left:24px;top:132.5px;font-size:10.67px;line-height:10.67px;color:#fff;white-space:pre;letter-spacing:-0.161px;">XAUUSD</span>
<svg style="left:66px;top:134px" width="6" height="6"><path d="M0.500 5l4-4" stroke="#8fb0a8" stroke-width="0.800"/></svg>
<div style="position:absolute;left:73px;top:132px;width:2px;height:12px;background:#b4bce0;"></div>
<div style="position:absolute;left:85px;top:132px;width:2px;height:12px;background:#b4bce0;"></div>
<div style="position:absolute;left:97px;top:132px;width:2px;height:12px;background:#b4bce0;"></div>
<div style="position:absolute;left:115px;top:132px;width:2px;height:12px;background:#b4bce0;"></div>
<div style="position:absolute;left:181px;top:132px;width:2px;height:12px;background:#b4bce0;"></div>
<span style="position:absolute;left:77px;top:132.5px;font-size:10px;line-height:10px;color:#fff;white-space:pre;">&lt;</span>
<span style="position:absolute;left:89px;top:132.5px;font-size:10px;line-height:10px;color:#fff;white-space:pre;">&gt;</span>
<svg style="left:100px;top:133.5px" width="13" height="8.500" viewBox="0 0 14 9"><path d="M0.500 8.500v-7.500h3.500l1 1.300h6v2" fill="none" stroke="#fff" stroke-width="0.900"/><path d="M0.500 8.500l2.500-5h10.500l-2.500 5z" fill="none" stroke="#fff" stroke-width="0.900"/></svg>
<span style="position:absolute;left:183px;top:132.5px;font-size:10.67px;line-height:10.67px;color:#fff;white-space:pre;letter-spacing:-0.191px;">13:51:57</span>
<div style="position:absolute;left:22.5px;top:149.5px;width:51px;height:16px;background:#3050d0;box-shadow:inset 0 0 0 1px #37474f;"></div><span style="position:absolute;left:34.5px;top:152.5px;font-size:10.67px;line-height:10.67px;color:#fff;white-space:pre;">Trade</span>
<div style="position:absolute;left:74.5px;top:149.5px;width:50px;height:16px;background:#00a8f0;box-shadow:inset 0 0 0 1px #37474f;"></div><span style="position:absolute;left:86.0px;top:152.5px;font-size:10.67px;line-height:10.67px;color:#fff;white-space:pre;">Close</span>
<div style="position:absolute;left:125.5px;top:149.5px;width:50px;height:16px;background:#00a8f0;box-shadow:inset 0 0 0 1px #37474f;"></div><span style="position:absolute;left:131.0px;top:152.5px;font-size:10.67px;line-height:10.67px;color:#fff;white-space:pre;">Settings</span>
<div style="position:absolute;left:176.5px;top:149.5px;width:45px;height:16px;background:#00a8f0;box-shadow:inset 0 0 0 1px #37474f;"></div><span style="position:absolute;left:190.0px;top:152.5px;font-size:10.67px;line-height:10.67px;color:#fff;white-space:pre;">Info</span>
<span style="position:absolute;left:26.5px;top:171.5px;font-size:10.67px;line-height:10.67px;color:#fff;white-space:pre;letter-spacing:-0.041px;">Sp: 11  Com: 0.00</span>
<svg style="left:162px;top:170px" width="12" height="10"><path d="M0.500 5q5.500-7 10.500 0q-5 7-10.500 0z" fill="none" stroke="#d8dcd8" stroke-width="1.300"/><circle cx="5.800" cy="5" r="1.400" fill="#d8dcd8"/></svg>
<svg style="left:186px;top:169px" width="11" height="11"><rect x="0.700" y="2" width="9" height="8.300" rx="1.200" fill="none" stroke="#d8dcd8" stroke-width="1.300"/><path d="M2.800 0.500v2M7.600 0.500v2" stroke="#d8dcd8" stroke-width="1.200"/><rect x="5.300" y="6" width="2.200" height="2.200" fill="#d8dcd8"/></svg>
<svg style="left:207px;top:169px" width="10" height="11"><path d="M1 8.500q1.500-1 1.500-4a2.500 2.500 0 0 1 5 0q0 3 1.500 4z" fill="none" stroke="#d8dcd8" stroke-width="1.200"/><circle cx="5" cy="1.200" r="1" fill="#d8dcd8"/><path d="M3.800 5.500h2.400M5 4.300v2.400" stroke="#d8dcd8" stroke-width="0.900"/><rect x="4.300" y="9" width="1.500" height="1.500" fill="#d8dcd8"/></svg>
<div style="position:absolute;left:22px;top:186px;width:199px;height:1px;background:#a8cce0;"></div>
<svg style="left:26px;top:190px" width="52" height="10"><path d="M0.500 9.500v-4.500h50v4.500" fill="none" stroke="#a8cce0" stroke-width="1"/></svg>
<div style="position:absolute;left:42.5px;top:190px;width:17px;height:8.5px;background:#3050d0;border-radius:1px;overflow:hidden;"></div><span style="position:absolute;left:44px;top:188px;font-size:10.67px;line-height:10.67px;color:#fff;white-space:pre;letter-spacing:-0.706px;clip-path:inset(2px 0 0 0);">RR</span>
<span style="position:absolute;left:25.5px;top:199.5px;font-size:10.67px;line-height:10.67px;color:#fff;white-space:pre;letter-spacing:-0.576px;">R/TP</span>
<span style="position:absolute;left:53.5px;top:199.5px;font-size:10.67px;line-height:10.67px;color:#fff;white-space:pre;letter-spacing:-0.430px;">R/SL</span>
<span style="position:absolute;left:97px;top:199.5px;font-size:10.67px;line-height:10.67px;color:#fff;white-space:pre;letter-spacing:-0.031px;">Risk %Ba</span>
<div style="position:absolute;left:162.5px;top:194.5px;width:58px;height:15px;background:#3050d0;box-shadow:inset 0 0 0 1px #37474f;"></div><span style="position:absolute;left:173.0px;top:197.0px;font-size:10.67px;line-height:10.67px;color:#fff;white-space:pre;">Lot calc</span>
<div style="position:absolute;left:22.5px;top:211.5px;width:26px;height:14px;background:#f5f5f5;box-shadow:inset 0 0 0 1px #6a7a80;border-radius:2px;"></div>
<span style="position:absolute;left:26px;top:213.5px;font-size:10.67px;line-height:10.67px;color:#222;white-space:pre;">3.0</span>
<svg style="left:42px;top:214px" width="5" height="9"><path d="M0.500 3l2-2 2 2M0.500 6l2 2 2-2" fill="none" stroke="#a8a8a8" stroke-width="0.900"/></svg>
<div style="position:absolute;left:53.5px;top:211.5px;width:26px;height:14px;background:#f5f5f5;box-shadow:inset 0 0 0 1px #6a7a80;border-radius:2px;"></div>
<span style="position:absolute;left:57.5px;top:213.5px;font-size:10.67px;line-height:10.67px;color:#222;white-space:pre;">1.0</span>
<svg style="left:73px;top:214px" width="5" height="9"><path d="M0.500 3l2-2 2 2M0.500 6l2 2 2-2" fill="none" stroke="#a8a8a8" stroke-width="0.900"/></svg>
<div style="position:absolute;left:84.5px;top:211.5px;width:10px;height:14px;background:#00a8f0;box-shadow:inset 0 0 0 1px #37474f;"></div><span style="position:absolute;left:87.5px;top:213.5px;font-size:10.67px;line-height:10.67px;color:#fff;white-space:pre;">-</span>
<div style="position:absolute;left:95.5px;top:211.5px;width:52px;height:14px;background:#f5f5f5;box-shadow:inset 0 0 0 1px #6a7a80;border-radius:2px;"></div>
<span style="position:absolute;left:110px;top:213.5px;font-size:10.67px;line-height:10.67px;color:#222;white-space:pre;">1.00</span>
<div style="position:absolute;left:147.5px;top:211.5px;width:10px;height:14px;background:#00a8f0;box-shadow:inset 0 0 0 1px #37474f;"></div><span style="position:absolute;left:149.5px;top:214.0px;font-size:10px;line-height:10px;color:#fff;white-space:pre;">+</span>
<div style="position:absolute;left:162.5px;top:211.5px;width:58px;height:14px;background:#00a8f0;box-shadow:inset 0 0 0 1px #37474f;"></div><span style="position:absolute;left:178.5px;top:213.5px;font-size:10.67px;line-height:10.67px;color:#fff;white-space:pre;">Lines</span>
<div style="position:absolute;left:22px;top:231px;width:199px;height:1px;background:#a8cce0;"></div>
<span style="position:absolute;left:26px;top:238.5px;font-size:10.67px;line-height:10.67px;color:#fff;white-space:pre;letter-spacing:-0.321px;">Comment</span>
<div style="position:absolute;left:22.0px;top:251.5px;width:199px;height:14px;background:#f5f5f5;box-shadow:inset 0 0 0 1px #6a7a80;border-radius:2px;"></div>
<span style="position:absolute;left:98px;top:253.5px;font-size:10.67px;line-height:10.67px;color:#222;white-space:pre;letter-spacing:-0.321px;">Comment</span>
<div style="position:absolute;left:22.0px;top:272.5px;width:74.5px;height:14px;background:#d9d9d9;box-shadow:inset 0 0 0 1px #6a7a80;border-radius:2px;"></div>
<span style="position:absolute;left:24.5px;top:273px;font-size:10.67px;line-height:10.67px;color:#8a8a8a;white-space:pre;">Lot</span>
<span style="position:absolute;left:47px;top:274.5px;font-size:10.67px;line-height:10.67px;color:#333;white-space:pre;">0.14</span>
<svg style="left:89px;top:275px" width="5" height="9"><path d="M0.500 3l2-2 2 2M0.500 6l2 2 2-2" fill="none" stroke="#a8a8a8" stroke-width="0.900"/></svg>
<span style="position:absolute;left:107px;top:274.5px;font-size:10.67px;line-height:10.67px;color:#fff;white-space:pre;letter-spacing:0.105px;">Entry:</span>
<div style="position:absolute;left:146.0px;top:272.5px;width:75px;height:14px;background:#f5f5f5;box-shadow:inset 0 0 0 1px #6a7a80;border-radius:2px;"></div>
<span style="position:absolute;left:173px;top:274.5px;font-size:10.67px;line-height:10.67px;color:#222;white-space:pre;">200</span>
<svg style="left:213px;top:275px" width="5" height="9"><path d="M0.500 3l2-2 2 2M0.500 6l2 2 2-2" fill="none" stroke="#a8a8a8" stroke-width="0.900"/></svg>
<div style="position:absolute;left:22.0px;top:293.5px;width:74.5px;height:14px;background:#f5f5f5;box-shadow:inset 0 0 0 1px #6a7a80;border-radius:2px;"></div>
<span style="position:absolute;left:24.5px;top:293.5px;font-size:10.67px;line-height:10.67px;color:#8a8a8a;white-space:pre;">tp</span>
<span style="position:absolute;left:48.5px;top:295.5px;font-size:10.67px;line-height:10.67px;color:#222;white-space:pre;">672</span>
<svg style="left:89px;top:296px" width="5" height="9"><path d="M0.500 3l2-2 2 2M0.500 6l2 2 2-2" fill="none" stroke="#a8a8a8" stroke-width="0.900"/></svg>
<div style="position:absolute;left:101.5px;top:293.5px;width:39px;height:14px;background:#00a8f0;box-shadow:inset 0 0 0 1px #37474f;"></div><span style="position:absolute;left:109.0px;top:295.5px;font-size:10.67px;line-height:10.67px;color:#fff;white-space:pre;">Price</span>
<div style="position:absolute;left:146.0px;top:293.5px;width:75px;height:14px;background:#f5f5f5;box-shadow:inset 0 0 0 1px #6a7a80;border-radius:2px;"></div>
<span style="position:absolute;left:149px;top:293.5px;font-size:10.67px;line-height:10.67px;color:#8a8a8a;white-space:pre;">sl</span>
<span style="position:absolute;left:173px;top:295.5px;font-size:10.67px;line-height:10.67px;color:#222;white-space:pre;">224</span>
<svg style="left:213px;top:296px" width="5" height="9"><path d="M0.500 3l2-2 2 2M0.500 6l2 2 2-2" fill="none" stroke="#a8a8a8" stroke-width="0.900"/></svg>
<div style="position:absolute;left:22.5px;top:319px;width:86.5px;height:17.5px;background:#ea5060;box-shadow:inset 0 0 0 1px #4a5a60;"></div>
<span style="position:absolute;left:56px;top:323px;font-size:10.67px;line-height:10.67px;color:#fff;white-space:pre;">Sell</span>
<div style="position:absolute;left:113px;top:319px;width:15.5px;height:16.5px;background:#0090e0;box-shadow:inset 0 0 0 1px #37606f;"></div>
<div style="position:absolute;left:134px;top:319px;width:86.5px;height:17.5px;background:#00a000;box-shadow:inset 0 0 0 1px #3a5a50;"></div>
<span style="position:absolute;left:167px;top:323px;font-size:10.67px;line-height:10.67px;color:#fff;white-space:pre;">Buy</span>
<div style="position:absolute;left:23.5px;top:342.5px;width:63px;height:14px;background:#00a8f0;box-shadow:inset 0 0 0 1px #37474f;"></div><span style="position:absolute;left:31.0px;top:344.5px;font-size:10.67px;line-height:10.67px;color:#fff;white-space:pre;">Close Sell</span>
<div style="position:absolute;left:90.5px;top:342.5px;width:62px;height:14px;background:#00a8f0;box-shadow:inset 0 0 0 1px #37474f;"></div><span style="position:absolute;left:100.5px;top:344.5px;font-size:10.67px;line-height:10.67px;color:#fff;white-space:pre;">Close All</span>
<div style="position:absolute;left:157.5px;top:342.5px;width:62px;height:14px;background:#00a8f0;box-shadow:inset 0 0 0 1px #37474f;"></div><span style="position:absolute;left:164.0px;top:344.5px;font-size:10.67px;line-height:10.67px;color:#fff;white-space:pre;">Close Buy</span>
<div style="position:absolute;left:23.5px;top:361.5px;width:63px;height:14px;background:#00a8f0;box-shadow:inset 0 0 0 1px #37474f;overflow:hidden;"></div><span style="position:absolute;left:21.5px;top:363.5px;font-size:10.67px;line-height:10.67px;color:#fff;white-space:pre;">Delete Orders</span>
<div style="position:absolute;left:23.5px;top:361.5px;width:63px;height:14px;background:transparent;box-shadow:inset 0 0 0 1px #37474f;"></div>
<div style="position:absolute;left:21px;top:361px;width:2.5px;height:15px;background:#0096a6;"></div>
<div style="position:absolute;left:86.5px;top:361px;width:4px;height:15px;background:#0096a6;"></div>
<div style="position:absolute;left:90.5px;top:361.5px;width:62px;height:14px;background:#00a8f0;box-shadow:inset 0 0 0 1px #37474f;"></div><span style="position:absolute;left:93.0px;top:363.5px;font-size:10.67px;line-height:10.67px;color:#fff;white-space:pre;">Close %</span>
<div style="position:absolute;left:135px;top:363px;width:16px;height:11.5px;background:#f8f8f8;"></div>
<span style="position:absolute;left:137px;top:363.5px;font-size:10.67px;line-height:10.67px;color:#222;white-space:pre;">50</span>
<div style="position:absolute;left:157.5px;top:361.5px;width:62px;height:14px;background:#00a8f0;box-shadow:inset 0 0 0 1px #37474f;"></div><span style="position:absolute;left:163.0px;top:363.5px;font-size:10.67px;line-height:10.67px;color:#fff;white-space:pre;">Breakeven</span>
<div style="position:absolute;left:8px;top:630px;width:382px;height:128px;background:rgba(0,0,0,0.62);"></div>
<div style="position:absolute;left:26px;top:732px;width:63px;height:18px;background:rgba(105,0,0,0.55);"></div>
<span style="position:absolute;left:31px;top:735.5px;font-size:11px;line-height:11px;color:rgba(160,150,150,0.6);white-space:pre;font-weight:bold;letter-spacing:-0.580px;">Show/Hide</span>
<span style="position:absolute;left:14px;top:740px;font-size:9px;line-height:9px;color:rgba(130,120,0,0.6);white-space:pre;">©</span>
<span style="position:absolute;left:92px;top:740px;font-size:9px;line-height:9px;color:rgba(120,110,0,0.45);white-space:pre;">ts: In/Forex</span>
<svg style="left:12px;top:632.500px" width="14" height="14"><circle cx="7" cy="7" r="6.300" fill="#060606" stroke="#00b8f8" stroke-width="1"/><path d="M0.900 8.200A6.200 6.200 0 0 1 10 1.500Q8.200 3.500 7.600 5.800Q5.500 6.300 4.500 7.800Q2.500 7.300 0.900 8.200z" fill="#00bfff"/><path d="M6.800 10q1.500-1.800 3.600-1q-0.200 1.800-1.800 2.300q-1.600 0.200-1.800-1.300z" fill="#00bfff"/></svg>
<span style="position:absolute;left:30.3px;top:633.5px;font-size:13.5px;line-height:13.5px;color:#00c0ff;white-space:pre;letter-spacing:-0.222px;">Next 6 Forex News</span>
<span style="position:absolute;left:165px;top:636px;font-size:10.5px;line-height:10.5px;color:#0a4658;white-space:pre;letter-spacing:0.092px;">Copyrights DaVinci FX Group</span>
<span style="position:absolute;left:285px;top:636.5px;font-size:9px;line-height:9px;color:#00b8f8;white-space:pre;letter-spacing:0.311px;text-shadow:0 0 0.5px #00b8f8;">Previous</span>
<span style="position:absolute;left:341px;top:636.5px;font-size:9px;line-height:9px;color:#00b8f8;white-space:pre;letter-spacing:0.311px;text-shadow:0 0 0.5px #00b8f8;">Forecast</span>
<span style="position:absolute;left:14px;top:655.5px;font-size:12px;line-height:12px;color:#da70d6;white-space:pre;letter-spacing:0.224px;">00:38:03</span>
<span style="position:absolute;left:71px;top:655.5px;font-size:12px;line-height:12px;color:#da70d6;white-space:pre;letter-spacing:0.111px;">USD: CPI m/m</span>
<span style="position:absolute;left:289px;top:655.5px;font-size:12px;line-height:12px;color:#da70d6;white-space:pre;letter-spacing:0.162px;">0.0%</span>
<span style="position:absolute;left:343px;top:655.5px;font-size:12px;line-height:12px;color:#da70d6;white-space:pre;letter-spacing:0.131px;">-0.1%</span>
<span style="position:absolute;left:14px;top:672.5px;font-size:12px;line-height:12px;color:#da70d6;white-space:pre;letter-spacing:0.224px;">00:38:03</span>
<span style="position:absolute;left:71px;top:672.5px;font-size:12px;line-height:12px;color:#da70d6;white-space:pre;letter-spacing:0.117px;">USD: Core CPI m/m</span>
<span style="position:absolute;left:289px;top:672.5px;font-size:12px;line-height:12px;color:#da70d6;white-space:pre;letter-spacing:0.162px;">0.3%</span>
<span style="position:absolute;left:345px;top:672.5px;font-size:12px;line-height:12px;color:#da70d6;white-space:pre;letter-spacing:0.162px;">0.3%</span>
<span style="position:absolute;left:14px;top:689.5px;font-size:12px;line-height:12px;color:#da70d6;white-space:pre;letter-spacing:0.336px;">02:11:03</span>
<span style="position:absolute;left:71px;top:689.5px;font-size:12px;line-height:12px;color:#da70d6;white-space:pre;letter-spacing:0.135px;">USD: IBD/TIPP Economic Optimism</span>
<span style="position:absolute;left:291px;top:689.5px;font-size:12px;line-height:12px;color:#da70d6;white-space:pre;letter-spacing:0.162px;">38.1</span>
<span style="position:absolute;left:14px;top:706.5px;font-size:12px;line-height:12px;color:#da70d6;white-space:pre;letter-spacing:0.224px;">05:09:03</span>
<span style="position:absolute;left:71px;top:706.5px;font-size:12px;line-height:12px;color:#da70d6;white-space:pre;letter-spacing:0.027px;">USD: 30-y Bond Auction</span>
<span style="position:absolute;left:281px;top:706.5px;font-size:12px;line-height:12px;color:#da70d6;white-space:pre;letter-spacing:0.217px;">3.11|2.3</span>
<span style="position:absolute;left:14px;top:723.5px;font-size:12px;line-height:12px;color:#da70d6;white-space:pre;letter-spacing:0.224px;">06:08:03</span>
<span style="position:absolute;left:71px;top:723.5px;font-size:12px;line-height:12px;color:#da70d6;white-space:pre;letter-spacing:0.120px;">USD: Federal Budget Balance</span>
<span style="position:absolute;left:282px;top:723.5px;font-size:12px;line-height:12px;color:#da70d6;white-space:pre;letter-spacing:0.266px;">-211.1B</span>
<span style="position:absolute;left:338px;top:723.5px;font-size:12px;line-height:12px;color:#da70d6;white-space:pre;letter-spacing:0.139px;">-215.0B</span>
<span style="position:absolute;left:14px;top:740.5px;font-size:12px;line-height:12px;color:#da70d6;white-space:pre;letter-spacing:0.224px;">10:53:03</span>
<span style="position:absolute;left:71px;top:740.5px;font-size:12px;line-height:12px;color:#da70d6;white-space:pre;letter-spacing:0.057px;">NZD: Current Account</span>
<span style="position:absolute;left:285px;top:740.5px;font-size:12px;line-height:12px;color:#da70d6;white-space:pre;letter-spacing:0.108px;">-6.14B</span>
<span style="position:absolute;left:341px;top:740.5px;font-size:12px;line-height:12px;color:#da70d6;white-space:pre;letter-spacing:0.108px;">-4.70B</span>
<div style="position:absolute;left:0px;top:1008px;width:1920px;height:24px;background:#f0f0f0;"></div>
<span style="position:absolute;left:2px;top:1016px;font-size:12px;line-height:12px;color:#000;white-space:pre;letter-spacing:-0.353px;">For Help, press F1</span>
<div style="position:absolute;left:1226px;top:1013px;width:1px;height:18px;background:#a0a0a0;"></div>
<div style="position:absolute;left:1342px;top:1013px;width:1px;height:18px;background:#a0a0a0;"></div>
<div style="position:absolute;left:1444px;top:1013px;width:1px;height:18px;background:#a0a0a0;"></div>
<div style="position:absolute;left:1515px;top:1013px;width:1px;height:18px;background:#a0a0a0;"></div>
<div style="position:absolute;left:1586px;top:1013px;width:1px;height:18px;background:#a0a0a0;"></div>
<div style="position:absolute;left:1654px;top:1013px;width:1px;height:18px;background:#a0a0a0;"></div>
<div style="position:absolute;left:1724px;top:1013px;width:1px;height:18px;background:#a0a0a0;"></div>
<div style="position:absolute;left:1790px;top:1013px;width:1px;height:18px;background:#a0a0a0;"></div>
<span style="position:absolute;left:1232.5px;top:1016px;font-size:12px;line-height:12px;color:#000;white-space:pre;letter-spacing:-0.003px;">Default</span>
<span style="position:absolute;left:1348px;top:1016px;font-size:12px;line-height:12px;color:#000;white-space:pre;letter-spacing:-0.557px;">2022.09.12 16:45</span>
<span style="position:absolute;left:1450.5px;top:1016px;font-size:12px;line-height:12px;color:#000;white-space:pre;letter-spacing:-0.537px;">O: 1727.95</span>
<span style="position:absolute;left:1521.5px;top:1016px;font-size:12px;line-height:12px;color:#000;white-space:pre;letter-spacing:-0.521px;">H: 1729.31</span>
<span style="position:absolute;left:1592.5px;top:1016px;font-size:12px;line-height:12px;color:#000;white-space:pre;letter-spacing:-0.571px;">L: 1727.86</span>
<span style="position:absolute;left:1660px;top:1016px;font-size:12px;line-height:12px;color:#000;white-space:pre;letter-spacing:-0.571px;">C: 1729.05</span>
<span style="position:absolute;left:1730px;top:1016px;font-size:12px;line-height:12px;color:#000;white-space:pre;letter-spacing:-0.624px;">V: 581</span>
<span style="position:absolute;left:1824px;top:1016px;font-size:12px;line-height:12px;color:#000;white-space:pre;letter-spacing:-0.435px;">12297/208 kb</span>
<svg style="left:1796px;top:1015px" width="24" height="13" viewBox="0 0 24 13"><rect x="0.0" y="9.5" width="1.6" height="3.0" fill="#b01818"/><rect x="0.0" y="0" width="1.6" height="8.5" fill="#4a8a1a"/><rect x="2.6" y="8.4" width="1.6" height="4.1" fill="#b01818"/><rect x="2.6" y="0" width="1.6" height="7.4" fill="#4a8a1a"/><rect x="5.2" y="7.3" width="1.6" height="5.2" fill="#b01818"/><rect x="5.2" y="0" width="1.6" height="6.3" fill="#4a8a1a"/><rect x="7.8" y="6.2" width="1.6" height="6.3" fill="#b01818"/><rect x="7.8" y="0" width="1.6" height="5.2" fill="#4a8a1a"/><rect x="10.4" y="5.1" width="1.6" height="7.4" fill="#b01818"/><rect x="10.4" y="0" width="1.6" height="4.1" fill="#4a8a1a"/><rect x="13.0" y="4.0" width="1.6" height="8.5" fill="#b01818"/><rect x="13.0" y="0" width="1.6" height="3.0" fill="#4a8a1a"/><rect x="15.6" y="2.9" width="1.6" height="9.6" fill="#b01818"/><rect x="15.6" y="0" width="1.6" height="1.9" fill="#4a8a1a"/><rect x="18.2" y="1.8" width="1.6" height="10.7" fill="#b01818"/><rect x="18.2" y="0" width="1.6" height="0.8" fill="#4a8a1a"/><rect x="20.8" y="0.7" width="1.6" height="11.8" fill="#b01818"/><rect x="20.8" y="0" width="1.6" height="0.0" fill="#4a8a1a"/></svg>
<div style="position:absolute;left:0px;top:1032px;width:1920px;height:48px;background:linear-gradient(90deg,#dedede 0%,#dfdfde 30%,#dededc 60%,#e1e1e1 100%);"></div>
<div style="position:absolute;left:0px;top:1032px;width:1920px;height:1px;background:#d3d3d3;"></div>
<svg style="left:19px;top:1043px" width="26" height="26" viewBox="0 0 26 26"><defs><linearGradient id="mg" x1="0" y1="0" x2="0.300" y2="1"><stop offset="0" stop-color="#ffd43c"/><stop offset="1" stop-color="#f6a307"/></linearGradient><linearGradient id="cg" x1="0" y1="0" x2="0" y2="1"><stop offset="0" stop-color="#c6daf2"/><stop offset="1" stop-color="#f6f9fd"/></linearGradient><mask id="mm"><rect width="26" height="26" fill="#fff"/><circle cx="8.500" cy="8.500" r="8.800" fill="#000"/></mask></defs><circle cx="13.500" cy="13" r="10" fill="url(#mg)" mask="url(#mm)"/><path d="M2.500 9.500a2.200 2.200 0 0 1 0.800-4.300a3.600 3.600 0 0 1 6.600-1a2.800 2.800 0 0 1 4.300 2.300a1.600 1.600 0 0 1-0.500 3z" fill="url(#cg)"/></svg>
<span style="position:absolute;left:51.5px;top:1044px;font-size:11.5px;line-height:11.5px;color:#1a1a1a;white-space:pre;letter-spacing:-0.228px;">57°F</span>
<span style="position:absolute;left:51.5px;top:1060px;font-size:12px;line-height:12px;color:#5c5c5c;white-space:pre;letter-spacing:0.082px;">Mostly clear</span>
<svg style="left:795px;top:1045px" width="23" height="23" viewBox="0 0 23 23"><defs><linearGradient id="wg" x1="0" y1="0" x2="1" y2="1"><stop offset="0" stop-color="#36c5f4"/><stop offset="1" stop-color="#0a6fd0"/></linearGradient></defs><rect x="0" y="0" width="10.800" height="10.800" rx="0.800" fill="url(#wg)"/><rect x="12.200" y="0" width="10.800" height="10.800" rx="0.800" fill="url(#wg)"/><rect x="0" y="12.200" width="10.800" height="10.800" rx="0.800" fill="url(#wg)"/><rect x="12.200" y="12.200" width="10.800" height="10.800" rx="0.800" fill="url(#wg)"/></svg>
<svg style="left:839px;top:1045px" width="24" height="24" viewBox="0 0 24 24"><circle cx="13.500" cy="9.500" r="7.800" fill="none" stroke="#1a1a1a" stroke-width="2.400"/><path d="M8 15.500l-6 6" stroke="#1a1a1a" stroke-width="3" stroke-linecap="round"/></svg>
<svg style="left:883px;top:1045px" width="24" height="23" viewBox="0 0 24 23"><rect x="6" y="0" width="18" height="15" rx="1.500" fill="#f4f4f4"/><rect x="0" y="6" width="18" height="16" rx="1.500" fill="#1e1e1e"/><rect x="6" y="6" width="12" height="9" fill="#9a9a9a"/></svg>
<svg style="left:927px;top:1044px" width="24" height="24" viewBox="0 0 24 24"><path d="M12 1a11 11 0 1 1-6 20.200l-5 2 1.500-5A11 11 0 0 1 12 1z" fill="#6a63d6"/><rect x="5.500" y="8" width="9" height="8" rx="1.500" fill="#fff"/><path d="M15 11l4-2.500v7l-4-2.500z" fill="#fff"/></svg>
<svg style="left:971px;top:1044px" width="23" height="24" viewBox="0 0 23 24"><ellipse cx="11.500" cy="12" rx="11.200" ry="11.800" fill="#e81123"/><ellipse cx="11.500" cy="12" rx="4.800" ry="8.300" fill="#e0e0df"/><path d="M15 2.500a11.500 11.500 0 0 1 0 19a9 11 0 0 0 0-19z" fill="#a80a18"/></svg>
<div style="position:absolute;left:980px;top:1072px;width:6px;height:3px;background:#858585;border-radius:1.500px;"></div>
<svg style="left:1015px;top:1046px" width="24" height="21" viewBox="0 0 24 21"><path d="M0 2a1.500 1.500 0 0 1 1.500-1.500h7l2.500 2.500h11.500a1.500 1.500 0 0 1 1.500 1.500v4h-24z" fill="#e8a816"/><rect x="0" y="4.500" width="24" height="16.500" rx="1.500" fill="#ffd34e"/><rect x="5" y="13" width="14" height="8" rx="1.500" fill="#1a78d8"/><rect x="8" y="15.500" width="8" height="1.500" rx="0.700" fill="#0f5cb0"/></svg>
<div style="position:absolute;left:1052px;top:1037px;width:38px;height:38px;background:#f1f1ee;border-radius:4px;box-shadow:0 0 0 0.500px #d2d2d0;"></div>
<svg style="left:1059px;top:1044px" width="24" height="24" viewBox="0 0 24 24"><circle cx="12" cy="12" r="12" fill="#21b36a"/><ellipse cx="10.800" cy="12" rx="4.500" ry="7" fill="none" stroke="#f1f1ee" stroke-width="3"/><rect x="13" y="9" width="9" height="2" fill="#f1f1ee"/><rect x="13" y="13" width="9" height="2" fill="#f1f1ee"/></svg>
<div style="position:absolute;left:1063px;top:1072px;width:16px;height:3px;background:#2a8a9a;border-radius:1.500px;"></div>
<svg style="left:1103px;top:1044px" width="24" height="24" viewBox="0 0 24 24"><rect width="24" height="24" fill="#131722"/><path d="M3.500 7.500h7.500v9.500h-3.700v-5.800h-3.800z" fill="#fff"/><circle cx="13.600" cy="9.400" r="1.900" fill="#fff"/><path d="M17.300 7.500h4.200l-4 9.500h-4.200z" fill="#fff"/></svg>
<div style="position:absolute;left:1112px;top:1072px;width:6px;height:3px;background:#858585;border-radius:1.500px;"></div>
<svg style="left:1718px;top:1051px" width="13" height="9" viewBox="0 0 13 9"><path d="M1 7.500l5.500-5.500 5.500 5.500" fill="none" stroke="#1a1a1a" stroke-width="1.300"/></svg>
<svg style="left:1743px;top:1048px" width="18" height="14" viewBox="0 0 18 14"><path d="M1 5.500a11 11 0 0 1 16 0" fill="none" stroke="#1a1a1a" stroke-width="1.100"/><path d="M3.500 8a7.500 7.500 0 0 1 11 0" fill="none" stroke="#1a1a1a" stroke-width="1.100"/><path d="M6 10.500a4 4 0 0 1 6 0" fill="none" stroke="#1a1a1a" stroke-width="1.100"/><circle cx="9" cy="12.800" r="1.100" fill="#1a1a1a"/></svg>
<svg style="left:1767px;top:1049px" width="16" height="13" viewBox="0 0 16 13"><path d="M0.500 4.500h3l3.500-3.500v11l-3.500-3.500h-3z" fill="none" stroke="#1a1a1a" stroke-width="1.100"/><path d="M9 4a3.500 3.500 0 0 1 0 5" fill="none" stroke="#1a1a1a" stroke-width="1.100"/><path d="M11 2a6 6 0 0 1 0 9" fill="none" stroke="#8a8a8a" stroke-width="1.100"/><path d="M13 0.500a8.500 8.500 0 0 1 0 12" fill="none" stroke="#c0c0c0" stroke-width="1.100"/></svg>
<svg style="left:1792px;top:1049px" width="17" height="13" viewBox="0 0 17 13"><rect x="3.500" y="4.500" width="11" height="7" rx="1.500" fill="none" stroke="#1a1a1a" stroke-width="1.200"/><rect x="14.500" y="6.500" width="1.800" height="3" fill="#1a1a1a"/><path d="M1.500 1v3M4 1v3M0.500 4h4.500v2a2.200 2.200 0 0 1-4.500 0z" fill="#1a1a1a" stroke="#1a1a1a" stroke-width="0.800"/></svg>
<span style="position:absolute;left:1834px;top:1042px;font-size:12px;line-height:12px;color:#1a1a1a;white-space:pre;letter-spacing:-0.218px;">6:51 AM</span>
<span style="position:absolute;left:1823.5px;top:1058px;font-size:12px;line-height:12px;color:#1a1a1a;white-space:pre;letter-spacing:-0.042px;">9/13/2022</span>
<div style="position:absolute;left:1884px;top:1048px;width:16px;height:16px;background:#2a8a9a;border-radius:8px;"></div>
<span style="position:absolute;left:1889.5px;top:1050px;font-size:11px;line-height:11px;color:#fff;white-space:pre;">1</span>
</div></body></html>
